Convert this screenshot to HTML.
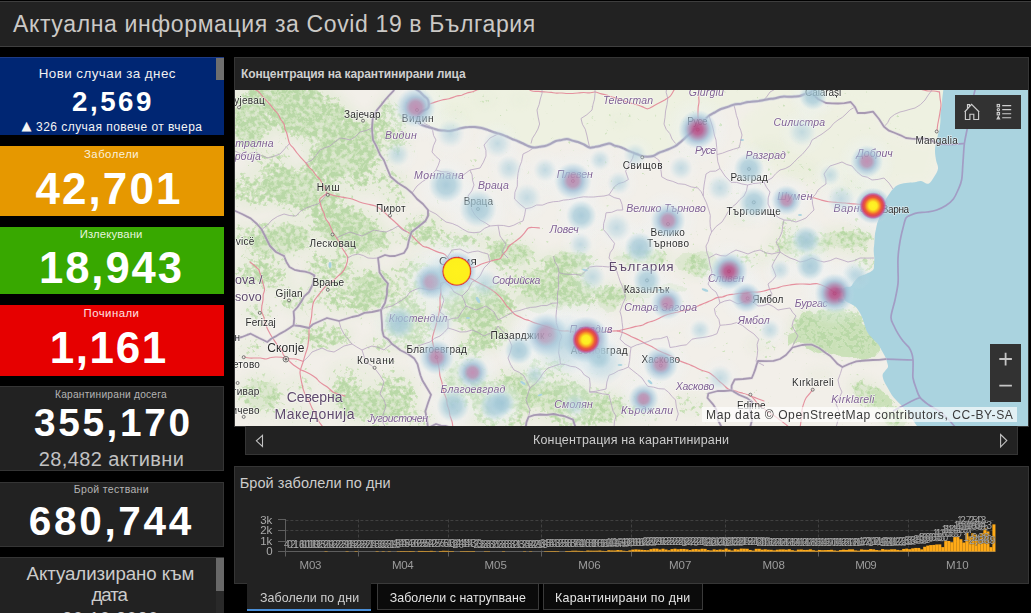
<!DOCTYPE html>
<html lang="bg">
<head>
<meta charset="utf-8">
<title>Актуална информация за Covid 19 в България</title>
<style>
html,body{margin:0;padding:0;background:#000;}
body{width:1031px;height:613px;overflow:hidden;position:relative;font-family:"Liberation Sans",sans-serif;color:#fff;}
.abs{position:absolute;}
.t{position:absolute;white-space:nowrap;}
#hdr{left:0;top:1px;width:1031px;height:46px;background:#222;border-top:1px solid #3e3e3e;border-bottom:1px solid #404040;box-sizing:border-box;}
.card{position:absolute;left:0;width:223.5px;box-sizing:border-box;}
.dark{background:#222;border:1px solid #353535;border-left:none;}
.panel{position:absolute;background:#222;border:1px solid #353535;box-sizing:border-box;}
</style>
</head>
<body>
<div id="hdr" class="abs"></div>
<div class="t" style="left:13px;top:13.43px;font-size:23px;line-height:23px;letter-spacing:0.629px;color:#cbc9c6;">Актуална информация за Covid 19 в България</div>
<div class="card" style="top:57.2px;height:77.8px;background:#002673;border-top:1px solid #1d3b86"></div>
<i class="abs" style="left:216px;top:58px;width:7.5px;height:22px;background:#6e6e6e"></i>
<div class="card" style="top:146px;height:70px;background:#e69800"></div>
<div class="card" style="top:227px;height:67px;background:#38a800"></div>
<div class="card" style="top:305px;height:70.5px;background:#e60000"></div>
<div class="card dark" style="top:386px;height:85px"></div>
<div class="card dark" style="top:482px;height:65px"></div>
<div class="card dark" style="top:557px;height:60px"></div>
<i class="abs" style="left:216px;top:558px;width:7.5px;height:56px;background:#292929"></i>
<i class="abs" style="left:216px;top:558px;width:7.5px;height:33px;background:#686868"></i>
<div class="t" style="left:38.7px;top:67.06px;font-size:13.4px;line-height:13.4px;letter-spacing:0.438px;color:#f0f0f0;">Нови случаи за днес</div>
<div class="t" style="left:72px;top:87.85px;font-size:27.7px;line-height:27.7px;letter-spacing:2.528px;color:#fff;font-weight:bold;">2,569</div>
<div class="t" style="left:21.6px;top:119.2px;font-size:13px;line-height:13px;letter-spacing:0px;color:#f4f4f4;font-family:&quot;DejaVu Sans&quot;,sans-serif;">▲</div>
<div class="t" style="left:36px;top:120.84px;font-size:12px;line-height:12px;letter-spacing:0.462px;color:#f4f4f4;">326 случая повече от вчера</div>
<div class="t" style="left:84px;top:149.03px;font-size:11.3px;line-height:11.3px;letter-spacing:0.514px;color:#fbf1dc;">Заболели</div>
<div class="t" style="left:35.4px;top:167.25px;font-size:44px;line-height:44px;letter-spacing:2.099px;color:#fff;font-weight:bold;">42,701</div>
<div class="t" style="left:79.7px;top:229.43px;font-size:11.3px;line-height:11.3px;letter-spacing:0.127px;color:#e6f4dc;">Излекувани</div>
<div class="t" style="left:39px;top:246.79px;font-size:43.6px;line-height:43.6px;letter-spacing:1.942px;color:#fff;font-weight:bold;">18,943</div>
<div class="t" style="left:83.5px;top:308.43px;font-size:11.3px;line-height:11.3px;letter-spacing:0.52px;color:#fde3e3;">Починали</div>
<div class="t" style="left:49.8px;top:326.05px;font-size:44px;line-height:44px;letter-spacing:1.566px;color:#fff;font-weight:bold;">1,161</div>
<div class="t" style="left:55px;top:389.67px;font-size:10.2px;line-height:10.2px;letter-spacing:0.233px;color:#b4b4b4;">Карантинирани досега</div>
<div class="t" style="left:34px;top:403.86px;font-size:38.8px;line-height:38.8px;letter-spacing:2.623px;color:#fff;font-weight:bold;">355,170</div>
<div class="t" style="left:38.8px;top:449.07px;font-size:20px;line-height:20px;letter-spacing:0.39px;color:#c2c2c2;">28,482 активни</div>
<div class="t" style="left:73.8px;top:484.11px;font-size:10.5px;line-height:10.5px;letter-spacing:0.322px;color:#b4b4b4;">Брой тествани</div>
<div class="t" style="left:28.8px;top:500.72px;font-size:40.5px;line-height:40.5px;letter-spacing:2.671px;color:#fff;font-weight:bold;">680,744</div>
<div class="t" style="left:26.5px;top:564.87px;font-size:18.7px;line-height:18.7px;letter-spacing:-0.065px;color:#ccc;">Актуализирано към</div>
<div class="t" style="left:91.5px;top:586.17px;font-size:18.7px;line-height:18.7px;letter-spacing:-1.078px;color:#ccc;">дата</div>
<div class="t" style="left:62px;top:609.77px;font-size:18.7px;line-height:18.7px;letter-spacing:0.318px;color:#ccc;">30.10.2020</div>
<div class="panel" style="left:234px;top:57px;width:795px;height:370px"></div>
<div class="t" style="left:241px;top:68.14px;font-size:12px;line-height:12px;letter-spacing:-0.113px;color:#cfcfcf;font-weight:bold;">Концентрация на карантинирани лица</div>
<div id="map" class="abs" style="left:235px;top:90px;width:793px;height:336px;background:#f2efe9;overflow:hidden"><svg width="793" height="336" viewBox="235 90 793 336" style="position:absolute;left:0;top:0;display:block">
<defs>
<filter id="fo" x="0" y="0" width="100%" height="100%" filterUnits="objectBoundingBox" color-interpolation-filters="sRGB">
 <feGaussianBlur in="SourceAlpha" stdDeviation="4" result="b"/>
 <feTurbulence type="fractalNoise" baseFrequency="0.045" numOctaves="2" seed="3" result="t2"/>
 <feColorMatrix in="t2" type="matrix" values="0 0 0 0 0 0 0 0 0 0 0 0 0 0 0 1 0 0 0 0" result="n2"/>
 <feTurbulence type="fractalNoise" baseFrequency="0.22" numOctaves="3" seed="7" result="t1"/>
 <feColorMatrix in="t1" type="matrix" values="0 0 0 0 0 0 0 0 0 0 0 0 0 0 0 1 0 0 0 0" result="n1"/>
 <feComposite in="b" in2="n2" operator="arithmetic" k1="0" k2="1" k3="0.9" k4="-0.45" result="b2"/>
 <feComposite in="b2" in2="n1" operator="arithmetic" k1="0" k2="5" k3="10" k4="-8.0" result="m"/>
 <feFlood flood-color="#cde2bc"/><feComposite in2="m" operator="in" result="light"/>
 <feComposite in="b2" in2="n1" operator="arithmetic" k1="0" k2="5" k3="10" k4="-9.6" result="m2"/>
 <feFlood flood-color="#b9d8a7"/><feComposite in2="m2" operator="in" result="dark"/>
 <feMerge><feMergeNode in="light"/><feMergeNode in="dark"/></feMerge>
 <feGaussianBlur stdDeviation="0.45"/>
</filter>
<filter id="wash" x="0" y="0" width="100%" height="100%"><feGaussianBlur stdDeviation="5"/></filter>
<filter id="rough" x="0" y="0" width="100%" height="100%"><feTurbulence type="fractalNoise" baseFrequency="0.06" numOctaves="3" seed="4" result="t"/><feDisplacementMap in="SourceGraphic" in2="t" scale="14" xChannelSelector="R" yChannelSelector="G"/><feGaussianBlur stdDeviation=".7"/></filter>
<filter id="hz" x="-20%" y="-20%" width="140%" height="140%"><feGaussianBlur stdDeviation="1.2"/></filter>
<filter id="bl" x="-5%" y="-5%" width="110%" height="110%"><feGaussianBlur stdDeviation="0.45"/></filter>
<radialGradient id="hazeg"><stop offset="0" stop-color="#eef4f8" stop-opacity=".6"/><stop offset=".55" stop-color="#eef4f8" stop-opacity=".4"/><stop offset="1" stop-color="#eef4f8" stop-opacity="0"/></radialGradient>
<radialGradient id="g1"><stop offset="0" stop-color="#a6cad8" stop-opacity=".62"/><stop offset=".5" stop-color="#b2d2de" stop-opacity=".42"/><stop offset="1" stop-color="#c2dde6" stop-opacity="0"/></radialGradient>
<radialGradient id="g2"><stop offset="0" stop-color="#9cc3d4" stop-opacity=".82"/><stop offset=".5" stop-color="#a6cad8" stop-opacity=".72"/><stop offset=".78" stop-color="#b5d5e0" stop-opacity=".4"/><stop offset="1" stop-color="#c2dde6" stop-opacity="0"/></radialGradient>
<radialGradient id="g3"><stop offset="0" stop-color="#bb82ac" stop-opacity=".88"/><stop offset=".3" stop-color="#b08fb2" stop-opacity=".86"/><stop offset=".52" stop-color="#9fbcd4" stop-opacity=".8"/><stop offset=".78" stop-color="#b0d0e1" stop-opacity=".45"/><stop offset="1" stop-color="#c2dde6" stop-opacity="0"/></radialGradient>
<radialGradient id="g4"><stop offset="0" stop-color="#b8457e" stop-opacity=".92"/><stop offset=".25" stop-color="#b2598e" stop-opacity=".9"/><stop offset=".45" stop-color="#a58bb2" stop-opacity=".85"/><stop offset=".62" stop-color="#9fbcd4" stop-opacity=".78"/><stop offset=".82" stop-color="#b0d0e1" stop-opacity=".45"/><stop offset="1" stop-color="#c0dbe8" stop-opacity="0"/></radialGradient>
<radialGradient id="g6"><stop offset="0" stop-color="#9a8ab6" stop-opacity=".9"/><stop offset=".55" stop-color="#9d9cc2" stop-opacity=".8"/><stop offset=".72" stop-color="#9fbcd4" stop-opacity=".65"/><stop offset=".88" stop-color="#b0d0e1" stop-opacity=".35"/><stop offset="1" stop-color="#c0dbe8" stop-opacity="0"/></radialGradient>
<radialGradient id="hbig"><stop offset="0" stop-color="#fff21c"/><stop offset=".86" stop-color="#fdf01c"/><stop offset=".91" stop-color="#f5a21f"/><stop offset=".96" stop-color="#e0342e"/><stop offset="1" stop-color="#c63a6c" stop-opacity=".8"/></radialGradient>
<radialGradient id="hmid"><stop offset="0" stop-color="#fff426"/><stop offset=".3" stop-color="#fdec22"/><stop offset=".46" stop-color="#f8a922"/><stop offset=".62" stop-color="#ec5a38"/><stop offset=".76" stop-color="#dc4253" stop-opacity=".95"/><stop offset=".88" stop-color="#c2579a" stop-opacity=".8"/><stop offset="1" stop-color="#a383b8" stop-opacity=".0"/></radialGradient>
</defs>
<rect x="235" y="90" width="793" height="336" fill="#f2efe9"/>
<path d="M410.0 84.0C410.0 84.3 408.3 84.7 410.0 86.0C411.7 87.3 417.0 89.7 420.0 92.0C423.0 94.3 426.7 97.3 428.0 100.0C429.3 102.7 429.2 106.0 428.0 108.0C426.8 110.0 422.8 110.3 421.0 112.0C419.2 113.7 417.2 116.0 417.0 118.0C416.8 120.0 418.2 122.5 420.0 124.0C421.8 125.5 425.0 126.0 428.0 127.0C431.0 128.0 434.3 129.3 438.0 130.0C441.7 130.7 446.0 131.3 450.0 131.0C454.0 130.7 457.8 128.7 462.0 128.0C466.2 127.3 470.7 126.7 475.0 127.0C479.3 127.3 483.8 128.8 488.0 130.0C492.2 131.2 496.0 132.5 500.0 134.0C504.0 135.5 508.0 137.3 512.0 139.0C516.0 140.7 520.3 142.6 524.0 144.0C527.7 145.4 530.5 147.3 534.0 147.6C537.5 147.9 541.3 147.1 545.0 146.0C548.7 144.9 552.3 142.2 556.0 141.0C559.7 139.8 563.3 138.8 567.0 139.0C570.7 139.2 574.2 140.6 578.0 142.0C581.8 143.4 585.8 146.9 589.5 147.6C593.2 148.3 596.8 146.7 600.0 146.0C603.2 145.3 605.7 143.3 609.0 143.5C612.3 143.7 615.8 145.4 620.0 147.0C624.2 148.6 630.0 151.4 634.0 153.0C638.0 154.6 640.8 156.0 644.0 156.5C647.2 157.0 649.7 156.9 653.0 156.0C656.3 155.1 660.2 152.7 664.0 151.0C667.8 149.3 672.2 148.0 675.5 146.0C678.8 144.0 681.2 141.3 684.0 139.0C686.8 136.7 689.3 134.7 692.0 132.0C694.7 129.3 697.2 125.7 700.0 123.0C702.8 120.3 705.5 118.0 709.0 115.7C712.5 113.4 716.9 110.8 721.0 109.0C725.1 107.2 729.3 105.8 733.8 104.6C738.3 103.4 743.0 102.8 748.0 102.0C753.0 101.2 758.0 100.9 764.0 100.0C770.0 99.1 778.0 97.2 784.0 96.5C790.0 95.8 795.7 96.6 800.0 96.0C804.3 95.4 807.0 92.5 810.0 93.0C813.0 93.5 815.3 97.3 818.0 99.0C820.7 100.7 822.7 102.2 826.0 103.0C829.3 103.8 833.9 103.7 838.0 103.5C842.1 103.3 847.9 101.4 850.7 102.0C853.5 102.6 853.8 105.2 855.0 107.0C856.2 108.8 856.0 112.0 857.7 113.0C859.4 114.0 862.5 113.2 865.0 113.0C867.5 112.8 870.7 110.6 873.0 111.6C875.3 112.6 877.2 116.5 879.0 119.0C880.8 121.5 881.3 124.5 884.0 126.8C886.7 129.1 891.3 131.1 895.0 133.0C898.7 134.9 902.3 137.0 906.0 138.0C909.7 139.0 913.3 138.8 917.0 139.0C920.7 139.2 924.2 138.2 928.0 139.0C931.8 139.8 936.7 143.2 939.5 144.0C942.3 144.8 944.1 154.0 945.0 144.0C945.9 134.0 945.0 94.0 945.0 84.0Z" fill="#ecf1dd" opacity=".75"/>
<path d="M764.0 100.0C771.7 99.2 799.7 94.5 810.0 95.0C820.3 95.5 819.2 101.8 826.0 103.0C832.8 104.2 845.4 100.3 850.7 102.0C856.0 103.7 854.0 111.4 857.7 113.0C861.4 114.6 868.6 109.3 873.0 111.6C877.4 113.9 878.5 122.4 884.0 126.8C889.5 131.2 896.8 135.1 906.0 138.0C915.2 140.9 934.5 139.0 939.5 144.0C944.5 149.0 937.9 161.3 936.0 168.0C934.1 174.7 934.3 181.2 928.0 184.0C921.7 186.8 905.3 181.7 898.0 185.0C890.7 188.3 890.3 201.5 884.0 204.0C877.7 206.5 869.0 202.3 860.0 200.0C851.0 197.7 840.0 193.3 830.0 190.0C820.0 186.7 810.0 183.3 800.0 180.0C790.0 176.7 779.2 175.0 770.0 170.0C760.8 165.0 750.0 158.3 745.0 150.0C740.0 141.7 740.8 125.0 740.0 120.0Z" fill="#ecf1dd" opacity=".6" filter="url(#wash)"/>
<g filter="url(#wash)" opacity=".4">
<ellipse cx="300" cy="110" rx="63.2" ry="33.6" transform="rotate(20 300 110)" fill="#d9e8ca" fill-opacity="1"/>
<ellipse cx="250" cy="120" rx="25.3" ry="36.0" transform="rotate(0 250 120)" fill="#d9e8ca" fill-opacity="1"/>
<ellipse cx="345" cy="150" rx="46.0" ry="36.0" transform="rotate(-30 345 150)" fill="#d9e8ca" fill-opacity="1"/>
<ellipse cx="300" cy="190" rx="51.7" ry="26.4" transform="rotate(10 300 190)" fill="#d9e8ca" fill-opacity="1"/>
<ellipse cx="255" cy="190" rx="28.7" ry="21.6" transform="rotate(0 255 190)" fill="#d9e8ca" fill-opacity="0.9"/>
<ellipse cx="350" cy="230" rx="46.0" ry="26.4" transform="rotate(20 350 230)" fill="#d9e8ca" fill-opacity="1"/>
<ellipse cx="280" cy="240" rx="40.2" ry="21.6" transform="rotate(-10 280 240)" fill="#d9e8ca" fill-opacity="1"/>
<ellipse cx="255" cy="270" rx="23.0" ry="21.6" transform="rotate(0 255 270)" fill="#d9e8ca" fill-opacity="0.7999999999999999"/>
<ellipse cx="330" cy="270" rx="28.7" ry="21.6" transform="rotate(0 330 270)" fill="#d9e8ca" fill-opacity="0.9"/>
<ellipse cx="370" cy="290" rx="28.7" ry="24.0" transform="rotate(0 370 290)" fill="#d9e8ca" fill-opacity="1"/>
<ellipse cx="300" cy="300" rx="20.7" ry="16.8" transform="rotate(0 300 300)" fill="#d9e8ca" fill-opacity="0.7"/>
<ellipse cx="390" cy="130" rx="20.7" ry="36.0" transform="rotate(0 390 130)" fill="#d9e8ca" fill-opacity="0.9"/>
<ellipse cx="395" cy="190" rx="16.1" ry="21.6" transform="rotate(0 395 190)" fill="#d9e8ca" fill-opacity="0.7999999999999999"/>
<ellipse cx="365" cy="180" rx="25.3" ry="16.8" transform="rotate(0 365 180)" fill="#d9e8ca" fill-opacity="0.7999999999999999"/>
<ellipse cx="270" cy="160" rx="23.0" ry="14.4" transform="rotate(0 270 160)" fill="#d9e8ca" fill-opacity="0.7"/>
<ellipse cx="245" cy="235" rx="16.1" ry="14.4" transform="rotate(0 245 235)" fill="#d9e8ca" fill-opacity="0.7999999999999999"/>
<ellipse cx="272" cy="275" rx="23.0" ry="19.2" transform="rotate(0 272 275)" fill="#d9e8ca" fill-opacity="0.7999999999999999"/>
<ellipse cx="258" cy="312" rx="16.1" ry="14.4" transform="rotate(0 258 312)" fill="#d9e8ca" fill-opacity="0.7"/>
<ellipse cx="325" cy="338" rx="27.6" ry="10.8" transform="rotate(0 325 338)" fill="#d9e8ca" fill-opacity="0.9"/>
<ellipse cx="405" cy="322" rx="27.6" ry="24.0" transform="rotate(0 405 322)" fill="#d9e8ca" fill-opacity="1"/>
<ellipse cx="375" cy="405" rx="46.0" ry="21.6" transform="rotate(0 375 405)" fill="#d9e8ca" fill-opacity="1"/>
<ellipse cx="345" cy="395" rx="20.7" ry="16.8" transform="rotate(0 345 395)" fill="#d9e8ca" fill-opacity="0.7999999999999999"/>
<ellipse cx="415" cy="275" rx="25.3" ry="21.6" transform="rotate(0 415 275)" fill="#d9e8ca" fill-opacity="0.7999999999999999"/>
<ellipse cx="350" cy="300" rx="29.9" ry="16.8" transform="rotate(0 350 300)" fill="#d9e8ca" fill-opacity="0.9"/>
<ellipse cx="300" cy="385" rx="16.1" ry="12.0" transform="rotate(0 300 385)" fill="#d9e8ca" fill-opacity="0.6"/>
<ellipse cx="420" cy="420" rx="16.1" ry="9.6" transform="rotate(0 420 420)" fill="#d9e8ca" fill-opacity="0.7999999999999999"/>
<ellipse cx="380" cy="345" rx="16.1" ry="9.6" transform="rotate(0 380 345)" fill="#d9e8ca" fill-opacity="0.6"/>
<ellipse cx="260" cy="395" rx="25.3" ry="24.0" transform="rotate(0 260 395)" fill="#d9e8ca" fill-opacity="0.7999999999999999"/>
<ellipse cx="320" cy="335" rx="34.5" ry="14.4" transform="rotate(0 320 335)" fill="#d9e8ca" fill-opacity="0.7"/>
<ellipse cx="350" cy="375" rx="25.3" ry="16.8" transform="rotate(0 350 375)" fill="#d9e8ca" fill-opacity="0.6"/>
<ellipse cx="395" cy="395" rx="25.3" ry="26.4" transform="rotate(0 395 395)" fill="#d9e8ca" fill-opacity="0.7999999999999999"/>
<ellipse cx="300" cy="415" rx="25.3" ry="12.0" transform="rotate(0 300 415)" fill="#d9e8ca" fill-opacity="0.6"/>
<ellipse cx="420" cy="330" rx="18.4" ry="21.6" transform="rotate(0 420 330)" fill="#d9e8ca" fill-opacity="0.7999999999999999"/>
<ellipse cx="250" cy="350" rx="13.8" ry="12.0" transform="rotate(0 250 350)" fill="#d9e8ca" fill-opacity="0.6"/>
<ellipse cx="420" cy="230" rx="25.3" ry="16.8" transform="rotate(-20 420 230)" fill="#d9e8ca" fill-opacity="0.9"/>
<ellipse cx="445" cy="240" rx="20.7" ry="12.0" transform="rotate(0 445 240)" fill="#d9e8ca" fill-opacity="0.7"/>
<ellipse cx="410" cy="300" rx="23.0" ry="14.4" transform="rotate(0 410 300)" fill="#d9e8ca" fill-opacity="0.7"/>
<ellipse cx="400" cy="340" rx="16.1" ry="14.4" transform="rotate(0 400 340)" fill="#d9e8ca" fill-opacity="0.6"/>
<ellipse cx="470" cy="240" rx="29.9" ry="10.8" transform="rotate(-10 470 240)" fill="#d9e8ca" fill-opacity="0.9"/>
<ellipse cx="510" cy="254" rx="27.6" ry="16.8" transform="rotate(0 510 254)" fill="#d9e8ca" fill-opacity="1"/>
<ellipse cx="567" cy="261" rx="29.9" ry="12.0" transform="rotate(0 567 261)" fill="#d9e8ca" fill-opacity="1"/>
<ellipse cx="642" cy="257" rx="32.2" ry="9.6" transform="rotate(0 642 257)" fill="#d9e8ca" fill-opacity="1"/>
<ellipse cx="696" cy="264" rx="19.5" ry="13.2" transform="rotate(0 696 264)" fill="#d9e8ca" fill-opacity="1"/>
<ellipse cx="750" cy="260" rx="27.6" ry="6.0" transform="rotate(0 750 260)" fill="#d9e8ca" fill-opacity="0.7"/>
<ellipse cx="800" cy="246" rx="34.5" ry="14.4" transform="rotate(0 800 246)" fill="#d9e8ca" fill-opacity="0.9"/>
<ellipse cx="845" cy="240" rx="32.2" ry="14.4" transform="rotate(0 845 240)" fill="#d9e8ca" fill-opacity="0.9"/>
<ellipse cx="865" cy="262" rx="13.8" ry="12.0" transform="rotate(0 865 262)" fill="#d9e8ca" fill-opacity="0.7999999999999999"/>
<ellipse cx="790" cy="226" rx="16.1" ry="9.6" transform="rotate(0 790 226)" fill="#d9e8ca" fill-opacity="0.6"/>
<ellipse cx="556" cy="287" rx="51.7" ry="22.8" transform="rotate(8 556 287)" fill="#d9e8ca" fill-opacity="1"/>
<ellipse cx="610" cy="296" rx="18.4" ry="14.4" transform="rotate(0 610 296)" fill="#d9e8ca" fill-opacity="1"/>
<ellipse cx="640" cy="300" rx="18.4" ry="7.2" transform="rotate(0 640 300)" fill="#d9e8ca" fill-opacity="0.6"/>
<ellipse cx="478" cy="305" rx="43.7" ry="28.8" transform="rotate(0 478 305)" fill="#d9e8ca" fill-opacity="1"/>
<ellipse cx="490" cy="335" rx="23.0" ry="16.8" transform="rotate(0 490 335)" fill="#d9e8ca" fill-opacity="1"/>
<ellipse cx="470" cy="350" rx="16.1" ry="16.8" transform="rotate(0 470 350)" fill="#d9e8ca" fill-opacity="0.9"/>
<ellipse cx="455" cy="385" rx="16.1" ry="26.4" transform="rotate(0 455 385)" fill="#d9e8ca" fill-opacity="1"/>
<ellipse cx="485" cy="395" rx="20.7" ry="21.6" transform="rotate(0 485 395)" fill="#d9e8ca" fill-opacity="1"/>
<ellipse cx="520" cy="390" rx="29.9" ry="24.0" transform="rotate(0 520 390)" fill="#d9e8ca" fill-opacity="1"/>
<ellipse cx="560" cy="395" rx="34.5" ry="21.6" transform="rotate(0 560 395)" fill="#d9e8ca" fill-opacity="1"/>
<ellipse cx="600" cy="405" rx="29.9" ry="16.8" transform="rotate(0 600 405)" fill="#d9e8ca" fill-opacity="1"/>
<ellipse cx="545" cy="365" rx="23.0" ry="12.0" transform="rotate(0 545 365)" fill="#d9e8ca" fill-opacity="0.7999999999999999"/>
<ellipse cx="640" cy="410" rx="23.0" ry="12.0" transform="rotate(0 640 410)" fill="#d9e8ca" fill-opacity="0.7"/>
<ellipse cx="690" cy="405" rx="18.4" ry="12.0" transform="rotate(0 690 405)" fill="#d9e8ca" fill-opacity="0.6"/>
<ellipse cx="580" cy="420" rx="46.0" ry="9.6" transform="rotate(0 580 420)" fill="#d9e8ca" fill-opacity="0.9"/>
<ellipse cx="500" cy="420" rx="34.5" ry="9.6" transform="rotate(0 500 420)" fill="#d9e8ca" fill-opacity="0.9"/>
<ellipse cx="830" cy="330" rx="41.4" ry="24.0" transform="rotate(10 830 330)" fill="#d9e8ca" fill-opacity="1"/>
<ellipse cx="862" cy="340" rx="23.0" ry="18.0" transform="rotate(30 862 340)" fill="#d9e8ca" fill-opacity="1"/>
<ellipse cx="845" cy="328" rx="25.3" ry="14.4" transform="rotate(10 845 328)" fill="#d9e8ca" fill-opacity="1"/>
<ellipse cx="800" cy="335" rx="16.1" ry="9.6" transform="rotate(0 800 335)" fill="#d9e8ca" fill-opacity="0.7"/>
<ellipse cx="850" cy="315" rx="18.4" ry="9.6" transform="rotate(0 850 315)" fill="#d9e8ca" fill-opacity="0.9"/>
<ellipse cx="760" cy="345" rx="13.8" ry="9.6" transform="rotate(0 760 345)" fill="#d9e8ca" fill-opacity="0.5"/>
<ellipse cx="870" cy="395" rx="25.3" ry="14.4" transform="rotate(30 870 395)" fill="#d9e8ca" fill-opacity="0.9"/>
<ellipse cx="895" cy="418" rx="16.1" ry="12.0" transform="rotate(0 895 418)" fill="#d9e8ca" fill-opacity="0.9"/>
<ellipse cx="820" cy="375" rx="16.1" ry="7.2" transform="rotate(0 820 375)" fill="#d9e8ca" fill-opacity="0.5"/>
<ellipse cx="770" cy="150" rx="16.1" ry="9.6" transform="rotate(0 770 150)" fill="#d9e8ca" fill-opacity="0.5"/>
<ellipse cx="800" cy="170" rx="18.4" ry="9.6" transform="rotate(0 800 170)" fill="#d9e8ca" fill-opacity="0.5"/>
<ellipse cx="850" cy="190" rx="16.1" ry="9.6" transform="rotate(0 850 190)" fill="#d9e8ca" fill-opacity="0.5"/>
<ellipse cx="740" cy="215" rx="16.1" ry="9.6" transform="rotate(0 740 215)" fill="#d9e8ca" fill-opacity="0.5"/>
<ellipse cx="520" cy="100" rx="9.2" ry="6.0" transform="rotate(0 520 100)" fill="#d9e8ca" fill-opacity="0.4"/>
<ellipse cx="620" cy="120" rx="9.2" ry="6.0" transform="rotate(0 620 120)" fill="#d9e8ca" fill-opacity="0.4"/>
<ellipse cx="455" cy="115" rx="13.8" ry="7.2" transform="rotate(0 455 115)" fill="#d9e8ca" fill-opacity="0.4"/>
<ellipse cx="485" cy="100" rx="11.5" ry="7.2" transform="rotate(0 485 100)" fill="#d9e8ca" fill-opacity="0.4"/>
</g>
<g filter="url(#rough)" opacity=".45">
<ellipse cx="645" cy="291" rx="45" ry="6" transform="rotate(-4 645 291)" fill="#cfe3be"/>
<ellipse cx="612" cy="300" rx="12" ry="11" transform="rotate(0 612 300)" fill="#cfe3be"/>
<ellipse cx="698" cy="264" rx="22" ry="10" transform="rotate(0 698 264)" fill="#cfe3be"/>
<ellipse cx="636" cy="258" rx="22" ry="5" transform="rotate(0 636 258)" fill="#cfe3be"/>
<ellipse cx="545" cy="300" rx="30" ry="10" transform="rotate(0 545 300)" fill="#cfe3be"/>
<ellipse cx="835" cy="332" rx="34" ry="17" transform="rotate(15 835 332)" fill="#cfe3be"/>
<ellipse cx="862" cy="343" rx="16" ry="12" transform="rotate(30 862 343)" fill="#cfe3be"/>
<ellipse cx="806" cy="338" rx="10" ry="5" transform="rotate(0 806 338)" fill="#cfe3be"/>
<ellipse cx="848" cy="322" rx="18" ry="8" transform="rotate(10 848 322)" fill="#cfe3be"/>
<ellipse cx="510" cy="254" rx="22" ry="12" transform="rotate(0 510 254)" fill="#cfe3be"/>
<ellipse cx="567" cy="261" rx="24" ry="9" transform="rotate(0 567 261)" fill="#cfe3be"/>
<ellipse cx="642" cy="257" rx="26" ry="7" transform="rotate(0 642 257)" fill="#cfe3be"/>
<ellipse cx="696" cy="264" rx="16" ry="10" transform="rotate(0 696 264)" fill="#cfe3be"/>
<ellipse cx="556" cy="287" rx="40" ry="15" transform="rotate(8 556 287)" fill="#cfe3be"/>
<ellipse cx="610" cy="296" rx="14" ry="10" transform="rotate(0 610 296)" fill="#cfe3be"/>
<ellipse cx="478" cy="305" rx="32" ry="20" transform="rotate(0 478 305)" fill="#cfe3be"/>
<ellipse cx="520" cy="392" rx="26" ry="18" transform="rotate(0 520 392)" fill="#cfe3be"/>
<ellipse cx="560" cy="398" rx="28" ry="15" transform="rotate(0 560 398)" fill="#cfe3be"/>
<ellipse cx="486" cy="398" rx="16" ry="16" transform="rotate(0 486 398)" fill="#cfe3be"/>
<ellipse cx="600" cy="407" rx="22" ry="10" transform="rotate(0 600 407)" fill="#cfe3be"/>
<ellipse cx="455" cy="385" rx="10" ry="18" transform="rotate(0 455 385)" fill="#cfe3be"/>
<ellipse cx="492" cy="334" rx="16" ry="11" transform="rotate(0 492 334)" fill="#cfe3be"/>
<ellipse cx="300" cy="110" rx="45" ry="20" transform="rotate(20 300 110)" fill="#cfe3be"/>
<ellipse cx="345" cy="150" rx="32" ry="24" transform="rotate(-30 345 150)" fill="#cfe3be"/>
<ellipse cx="350" cy="230" rx="34" ry="18" transform="rotate(20 350 230)" fill="#cfe3be"/>
<ellipse cx="280" cy="240" rx="28" ry="14" transform="rotate(-10 280 240)" fill="#cfe3be"/>
<ellipse cx="300" cy="190" rx="36" ry="16" transform="rotate(10 300 190)" fill="#cfe3be"/>
<ellipse cx="250" cy="122" rx="16" ry="24" transform="rotate(0 250 122)" fill="#cfe3be"/>
<ellipse cx="372" cy="290" rx="20" ry="15" transform="rotate(0 372 290)" fill="#cfe3be"/>
<ellipse cx="405" cy="322" rx="18" ry="14" transform="rotate(0 405 322)" fill="#cfe3be"/>
<ellipse cx="375" cy="405" rx="32" ry="13" transform="rotate(0 375 405)" fill="#cfe3be"/>
<ellipse cx="260" cy="395" rx="16" ry="14" transform="rotate(0 260 395)" fill="#cfe3be"/>
<ellipse cx="800" cy="246" rx="26" ry="9" transform="rotate(0 800 246)" fill="#cfe3be"/>
<ellipse cx="845" cy="240" rx="24" ry="9" transform="rotate(0 845 240)" fill="#cfe3be"/>
<ellipse cx="870" cy="395" rx="18" ry="9" transform="rotate(30 870 395)" fill="#cfe3be"/>
<ellipse cx="895" cy="418" rx="12" ry="8" transform="rotate(0 895 418)" fill="#cfe3be"/>
</g>
<g filter="url(#rough)" opacity=".92">
<ellipse cx="836" cy="334" rx="42" ry="22" transform="rotate(12 836 334)" fill="#c8e0b6"/>
<ellipse cx="866" cy="345" rx="15" ry="12" transform="rotate(20 866 345)" fill="#c8e0b6"/>
<ellipse cx="800" cy="338" rx="12" ry="6" transform="rotate(0 800 338)" fill="#c8e0b6"/>
<ellipse cx="848" cy="318" rx="16" ry="7" transform="rotate(10 848 318)" fill="#c8e0b6"/>
<ellipse cx="880" cy="398" rx="14" ry="7" transform="rotate(30 880 398)" fill="#c8e0b6"/>
</g>
<g filter="url(#fo)">
<ellipse cx="300" cy="110" rx="55" ry="28" transform="rotate(20 300 110)" fill="#000" fill-opacity="1"/>
<ellipse cx="250" cy="120" rx="22" ry="30" transform="rotate(0 250 120)" fill="#000" fill-opacity="0.9"/>
<ellipse cx="345" cy="150" rx="40" ry="30" transform="rotate(-30 345 150)" fill="#000" fill-opacity="1"/>
<ellipse cx="300" cy="190" rx="45" ry="22" transform="rotate(10 300 190)" fill="#000" fill-opacity="0.9"/>
<ellipse cx="255" cy="190" rx="25" ry="18" transform="rotate(0 255 190)" fill="#000" fill-opacity="0.8"/>
<ellipse cx="350" cy="230" rx="40" ry="22" transform="rotate(20 350 230)" fill="#000" fill-opacity="1"/>
<ellipse cx="280" cy="240" rx="35" ry="18" transform="rotate(-10 280 240)" fill="#000" fill-opacity="0.9"/>
<ellipse cx="255" cy="270" rx="20" ry="18" transform="rotate(0 255 270)" fill="#000" fill-opacity="0.7"/>
<ellipse cx="330" cy="270" rx="25" ry="18" transform="rotate(0 330 270)" fill="#000" fill-opacity="0.8"/>
<ellipse cx="370" cy="290" rx="25" ry="20" transform="rotate(0 370 290)" fill="#000" fill-opacity="0.9"/>
<ellipse cx="300" cy="300" rx="18" ry="14" transform="rotate(0 300 300)" fill="#000" fill-opacity="0.6"/>
<ellipse cx="390" cy="130" rx="18" ry="30" transform="rotate(0 390 130)" fill="#000" fill-opacity="0.8"/>
<ellipse cx="395" cy="190" rx="14" ry="18" transform="rotate(0 395 190)" fill="#000" fill-opacity="0.7"/>
<ellipse cx="365" cy="180" rx="22" ry="14" transform="rotate(0 365 180)" fill="#000" fill-opacity="0.7"/>
<ellipse cx="270" cy="160" rx="20" ry="12" transform="rotate(0 270 160)" fill="#000" fill-opacity="0.6"/>
<ellipse cx="245" cy="235" rx="14" ry="12" transform="rotate(0 245 235)" fill="#000" fill-opacity="0.7"/>
<ellipse cx="272" cy="275" rx="20" ry="16" transform="rotate(0 272 275)" fill="#000" fill-opacity="0.7"/>
<ellipse cx="258" cy="312" rx="14" ry="12" transform="rotate(0 258 312)" fill="#000" fill-opacity="0.6"/>
<ellipse cx="325" cy="338" rx="24" ry="9" transform="rotate(0 325 338)" fill="#000" fill-opacity="0.8"/>
<ellipse cx="405" cy="322" rx="24" ry="20" transform="rotate(0 405 322)" fill="#000" fill-opacity="0.9"/>
<ellipse cx="375" cy="405" rx="40" ry="18" transform="rotate(0 375 405)" fill="#000" fill-opacity="0.9"/>
<ellipse cx="345" cy="395" rx="18" ry="14" transform="rotate(0 345 395)" fill="#000" fill-opacity="0.7"/>
<ellipse cx="415" cy="275" rx="22" ry="18" transform="rotate(0 415 275)" fill="#000" fill-opacity="0.7"/>
<ellipse cx="350" cy="300" rx="26" ry="14" transform="rotate(0 350 300)" fill="#000" fill-opacity="0.8"/>
<ellipse cx="300" cy="385" rx="14" ry="10" transform="rotate(0 300 385)" fill="#000" fill-opacity="0.5"/>
<ellipse cx="420" cy="420" rx="14" ry="8" transform="rotate(0 420 420)" fill="#000" fill-opacity="0.7"/>
<ellipse cx="380" cy="345" rx="14" ry="8" transform="rotate(0 380 345)" fill="#000" fill-opacity="0.5"/>
<ellipse cx="260" cy="395" rx="22" ry="20" transform="rotate(0 260 395)" fill="#000" fill-opacity="0.7"/>
<ellipse cx="320" cy="335" rx="30" ry="12" transform="rotate(0 320 335)" fill="#000" fill-opacity="0.6"/>
<ellipse cx="350" cy="375" rx="22" ry="14" transform="rotate(0 350 375)" fill="#000" fill-opacity="0.5"/>
<ellipse cx="395" cy="395" rx="22" ry="22" transform="rotate(0 395 395)" fill="#000" fill-opacity="0.7"/>
<ellipse cx="300" cy="415" rx="22" ry="10" transform="rotate(0 300 415)" fill="#000" fill-opacity="0.5"/>
<ellipse cx="420" cy="330" rx="16" ry="18" transform="rotate(0 420 330)" fill="#000" fill-opacity="0.7"/>
<ellipse cx="250" cy="350" rx="12" ry="10" transform="rotate(0 250 350)" fill="#000" fill-opacity="0.5"/>
<ellipse cx="420" cy="230" rx="22" ry="14" transform="rotate(-20 420 230)" fill="#000" fill-opacity="0.8"/>
<ellipse cx="445" cy="240" rx="18" ry="10" transform="rotate(0 445 240)" fill="#000" fill-opacity="0.6"/>
<ellipse cx="410" cy="300" rx="20" ry="12" transform="rotate(0 410 300)" fill="#000" fill-opacity="0.6"/>
<ellipse cx="400" cy="340" rx="14" ry="12" transform="rotate(0 400 340)" fill="#000" fill-opacity="0.5"/>
<ellipse cx="470" cy="240" rx="26" ry="9" transform="rotate(-10 470 240)" fill="#000" fill-opacity="0.8"/>
<ellipse cx="510" cy="254" rx="24" ry="14" transform="rotate(0 510 254)" fill="#000" fill-opacity="1"/>
<ellipse cx="567" cy="261" rx="26" ry="10" transform="rotate(0 567 261)" fill="#000" fill-opacity="1"/>
<ellipse cx="642" cy="257" rx="28" ry="8" transform="rotate(0 642 257)" fill="#000" fill-opacity="1"/>
<ellipse cx="696" cy="264" rx="17" ry="11" transform="rotate(0 696 264)" fill="#000" fill-opacity="1"/>
<ellipse cx="750" cy="260" rx="24" ry="5" transform="rotate(0 750 260)" fill="#000" fill-opacity="0.6"/>
<ellipse cx="800" cy="246" rx="30" ry="12" transform="rotate(0 800 246)" fill="#000" fill-opacity="0.8"/>
<ellipse cx="845" cy="240" rx="28" ry="12" transform="rotate(0 845 240)" fill="#000" fill-opacity="0.8"/>
<ellipse cx="865" cy="262" rx="12" ry="10" transform="rotate(0 865 262)" fill="#000" fill-opacity="0.7"/>
<ellipse cx="790" cy="226" rx="14" ry="8" transform="rotate(0 790 226)" fill="#000" fill-opacity="0.5"/>
<ellipse cx="556" cy="287" rx="45" ry="19" transform="rotate(8 556 287)" fill="#000" fill-opacity="1"/>
<ellipse cx="610" cy="296" rx="16" ry="12" transform="rotate(0 610 296)" fill="#000" fill-opacity="0.9"/>
<ellipse cx="640" cy="300" rx="16" ry="6" transform="rotate(0 640 300)" fill="#000" fill-opacity="0.5"/>
<ellipse cx="478" cy="305" rx="38" ry="24" transform="rotate(0 478 305)" fill="#000" fill-opacity="1"/>
<ellipse cx="490" cy="335" rx="20" ry="14" transform="rotate(0 490 335)" fill="#000" fill-opacity="0.9"/>
<ellipse cx="470" cy="350" rx="14" ry="14" transform="rotate(0 470 350)" fill="#000" fill-opacity="0.8"/>
<ellipse cx="455" cy="385" rx="14" ry="22" transform="rotate(0 455 385)" fill="#000" fill-opacity="0.9"/>
<ellipse cx="485" cy="395" rx="18" ry="18" transform="rotate(0 485 395)" fill="#000" fill-opacity="0.9"/>
<ellipse cx="520" cy="390" rx="26" ry="20" transform="rotate(0 520 390)" fill="#000" fill-opacity="1"/>
<ellipse cx="560" cy="395" rx="30" ry="18" transform="rotate(0 560 395)" fill="#000" fill-opacity="1"/>
<ellipse cx="600" cy="405" rx="26" ry="14" transform="rotate(0 600 405)" fill="#000" fill-opacity="0.9"/>
<ellipse cx="545" cy="365" rx="20" ry="10" transform="rotate(0 545 365)" fill="#000" fill-opacity="0.7"/>
<ellipse cx="640" cy="410" rx="20" ry="10" transform="rotate(0 640 410)" fill="#000" fill-opacity="0.6"/>
<ellipse cx="690" cy="405" rx="16" ry="10" transform="rotate(0 690 405)" fill="#000" fill-opacity="0.5"/>
<ellipse cx="580" cy="420" rx="40" ry="8" transform="rotate(0 580 420)" fill="#000" fill-opacity="0.8"/>
<ellipse cx="500" cy="420" rx="30" ry="8" transform="rotate(0 500 420)" fill="#000" fill-opacity="0.8"/>
<ellipse cx="830" cy="330" rx="36" ry="20" transform="rotate(10 830 330)" fill="#000" fill-opacity="1"/>
<ellipse cx="862" cy="340" rx="20" ry="15" transform="rotate(30 862 340)" fill="#000" fill-opacity="1"/>
<ellipse cx="845" cy="328" rx="22" ry="12" transform="rotate(10 845 328)" fill="#000" fill-opacity="1"/>
<ellipse cx="800" cy="335" rx="14" ry="8" transform="rotate(0 800 335)" fill="#000" fill-opacity="0.6"/>
<ellipse cx="850" cy="315" rx="16" ry="8" transform="rotate(0 850 315)" fill="#000" fill-opacity="0.8"/>
<ellipse cx="760" cy="345" rx="12" ry="8" transform="rotate(0 760 345)" fill="#000" fill-opacity="0.4"/>
<ellipse cx="870" cy="395" rx="22" ry="12" transform="rotate(30 870 395)" fill="#000" fill-opacity="0.8"/>
<ellipse cx="895" cy="418" rx="14" ry="10" transform="rotate(0 895 418)" fill="#000" fill-opacity="0.8"/>
<ellipse cx="820" cy="375" rx="14" ry="6" transform="rotate(0 820 375)" fill="#000" fill-opacity="0.4"/>
<ellipse cx="770" cy="150" rx="14" ry="8" transform="rotate(0 770 150)" fill="#000" fill-opacity="0.4"/>
<ellipse cx="800" cy="170" rx="16" ry="8" transform="rotate(0 800 170)" fill="#000" fill-opacity="0.4"/>
<ellipse cx="850" cy="190" rx="14" ry="8" transform="rotate(0 850 190)" fill="#000" fill-opacity="0.4"/>
<ellipse cx="740" cy="215" rx="14" ry="8" transform="rotate(0 740 215)" fill="#000" fill-opacity="0.4"/>
<ellipse cx="520" cy="100" rx="8" ry="5" transform="rotate(0 520 100)" fill="#000" fill-opacity="0.3"/>
<ellipse cx="620" cy="120" rx="8" ry="5" transform="rotate(0 620 120)" fill="#000" fill-opacity="0.3"/>
<ellipse cx="455" cy="115" rx="12" ry="6" transform="rotate(0 455 115)" fill="#000" fill-opacity="0.3"/>
<ellipse cx="485" cy="100" rx="10" ry="6" transform="rotate(0 485 100)" fill="#000" fill-opacity="0.3"/>
</g>
<g>
<circle cx="415.7" cy="107.4" r="35.7" fill="url(#hazeg)" opacity="0.8"/>
<circle cx="450.4" cy="133.8" r="25.2" fill="url(#hazeg)" opacity="0.55"/>
<circle cx="446.2" cy="185" r="31.5" fill="url(#hazeg)" opacity="0.8"/>
<circle cx="478" cy="208.7" r="33.6" fill="url(#hazeg)" opacity="0.8"/>
<circle cx="497.5" cy="143.5" r="25.2" fill="url(#hazeg)" opacity="0.55"/>
<circle cx="397.7" cy="154.6" r="21.0" fill="url(#hazeg)" opacity="0.55"/>
<circle cx="431.3" cy="281.8" r="32.6" fill="url(#hazeg)" opacity="0.8"/>
<circle cx="399" cy="322.6" r="29.4" fill="url(#hazeg)" opacity="0.8"/>
<circle cx="436.5" cy="357.2" r="31.5" fill="url(#hazeg)" opacity="0.8"/>
<circle cx="439.3" cy="322.6" r="25.2" fill="url(#hazeg)" opacity="0.55"/>
<circle cx="472.5" cy="372.5" r="29.4" fill="url(#hazeg)" opacity="0.8"/>
<circle cx="453" cy="405.8" r="29.4" fill="url(#hazeg)" opacity="0.8"/>
<circle cx="494.7" cy="405.8" r="27.3" fill="url(#hazeg)" opacity="0.8"/>
<circle cx="485" cy="283.7" r="25.2" fill="url(#hazeg)" opacity="0.55"/>
<circle cx="697.7" cy="129.6" r="34.6" fill="url(#hazeg)" opacity="0.8"/>
<circle cx="572.9" cy="181" r="33.6" fill="url(#hazeg)" opacity="0.8"/>
<circle cx="581.2" cy="215.6" r="27.3" fill="url(#hazeg)" opacity="0.8"/>
<circle cx="527" cy="197.6" r="25.2" fill="url(#hazeg)" opacity="0.55"/>
<circle cx="509" cy="168.4" r="23.1" fill="url(#hazeg)" opacity="0.55"/>
<circle cx="668" cy="220.6" r="31.5" fill="url(#hazeg)" opacity="0.8"/>
<circle cx="639.5" cy="247.5" r="27.3" fill="url(#hazeg)" opacity="0.8"/>
<circle cx="616.6" cy="227.6" r="25.2" fill="url(#hazeg)" opacity="0.55"/>
<circle cx="580.6" cy="244.5" r="21.0" fill="url(#hazeg)" opacity="0.55"/>
<circle cx="618.8" cy="183" r="21.0" fill="url(#hazeg)" opacity="0.55"/>
<circle cx="749" cy="168.4" r="27.3" fill="url(#hazeg)" opacity="0.8"/>
<circle cx="753.8" cy="202.3" r="27.3" fill="url(#hazeg)" opacity="0.8"/>
<circle cx="720" cy="188" r="23.1" fill="url(#hazeg)" opacity="0.55"/>
<circle cx="681" cy="168" r="21.0" fill="url(#hazeg)" opacity="0.55"/>
<circle cx="635" cy="155" r="21.0" fill="url(#hazeg)" opacity="0.55"/>
<circle cx="545" cy="170" r="21.0" fill="url(#hazeg)" opacity="0.55"/>
<circle cx="600" cy="160" r="18.9" fill="url(#hazeg)" opacity="0.55"/>
<circle cx="592.3" cy="276.8" r="23.1" fill="url(#hazeg)" opacity="0.55"/>
<circle cx="647" cy="280.4" r="25.2" fill="url(#hazeg)" opacity="0.8"/>
<circle cx="729" cy="271.3" r="33.6" fill="url(#hazeg)" opacity="0.8"/>
<circle cx="746.3" cy="297.6" r="27.3" fill="url(#hazeg)" opacity="0.8"/>
<circle cx="667.2" cy="303.2" r="29.4" fill="url(#hazeg)" opacity="0.8"/>
<circle cx="546.5" cy="335" r="39.9" fill="url(#hazeg)" opacity="0.8"/>
<circle cx="598.7" cy="356.4" r="23.1" fill="url(#hazeg)" opacity="0.8"/>
<circle cx="660.8" cy="364.2" r="31.5" fill="url(#hazeg)" opacity="0.8"/>
<circle cx="643.6" cy="398.9" r="27.3" fill="url(#hazeg)" opacity="0.8"/>
<circle cx="518.8" cy="350.3" r="25.2" fill="url(#hazeg)" opacity="0.8"/>
<circle cx="502" cy="403" r="23.1" fill="url(#hazeg)" opacity="0.8"/>
<circle cx="720" cy="378" r="23.1" fill="url(#hazeg)" opacity="0.55"/>
<circle cx="575" cy="405" r="21.0" fill="url(#hazeg)" opacity="0.55"/>
<circle cx="535" cy="375" r="18.9" fill="url(#hazeg)" opacity="0.55"/>
<circle cx="700" cy="330" r="18.9" fill="url(#hazeg)" opacity="0.55"/>
<circle cx="770" cy="330" r="18.9" fill="url(#hazeg)" opacity="0.55"/>
<circle cx="802" cy="132" r="25.2" fill="url(#hazeg)" opacity="0.55"/>
<circle cx="813" cy="96" r="25.2" fill="url(#hazeg)" opacity="0.8"/>
<circle cx="866.8" cy="161.5" r="29.4" fill="url(#hazeg)" opacity="0.8"/>
<circle cx="786.4" cy="200.3" r="27.3" fill="url(#hazeg)" opacity="0.8"/>
<circle cx="841" cy="199" r="25.2" fill="url(#hazeg)" opacity="0.55"/>
<circle cx="806" cy="240" r="25.2" fill="url(#hazeg)" opacity="0.8"/>
<circle cx="810" cy="266" r="25.2" fill="url(#hazeg)" opacity="0.8"/>
<circle cx="854" cy="274" r="21.0" fill="url(#hazeg)" opacity="0.55"/>
<circle cx="859" cy="278" r="21.0" fill="url(#hazeg)" opacity="0.55"/>
<circle cx="780" cy="270" r="18.9" fill="url(#hazeg)" opacity="0.55"/>
<circle cx="830" cy="175" r="18.9" fill="url(#hazeg)" opacity="0.55"/>
<circle cx="834.7" cy="293.4" r="35.7" fill="url(#hazeg)" opacity="0.8"/>
<circle cx="456.8" cy="271.3" r="35.7" fill="url(#hazeg)" opacity="0.8"/>
<circle cx="446" cy="278" r="46.2" fill="url(#hazeg)" opacity="0.55"/>
<circle cx="586.1" cy="339.8" r="42.0" fill="url(#hazeg)" opacity="0.8"/>
<circle cx="873" cy="205.8" r="32.6" fill="url(#hazeg)" opacity="0.8"/>
<circle cx="565" cy="345" r="54.6" fill="url(#hazeg)" opacity="0.55"/>
<circle cx="602" cy="362" r="42.0" fill="url(#hazeg)" opacity="0.55"/>
</g>
<path d="M943.6 88.0C943.5 88.9 943.1 91.7 942.9 93.5C942.7 95.4 942.3 97.2 942.2 99.0C942.0 100.9 942.2 102.8 942.0 104.6C941.8 106.4 941.4 108.0 941.1 109.7C940.8 111.4 940.5 113.1 940.4 114.8C940.3 116.5 940.6 117.5 940.5 120.0C940.4 122.5 939.9 127.1 939.5 129.6C939.1 132.1 938.3 133.0 937.9 134.7C937.5 136.5 937.4 138.2 937.0 140.0C936.6 141.8 935.8 143.8 935.4 145.8C935.1 147.8 934.9 149.4 935.0 151.8C935.1 154.2 935.5 157.2 936.0 160.0C936.5 162.8 938.3 165.6 938.0 168.4C937.7 171.2 935.6 174.4 934.0 177.0C932.4 179.6 930.6 183.0 928.4 183.7C926.2 184.4 923.3 181.2 921.0 181.0C918.7 180.8 917.0 182.0 914.5 182.3C912.0 182.6 908.8 182.6 906.0 183.0C903.2 183.4 900.2 184.0 898.0 185.0C895.8 186.0 894.4 187.6 893.0 189.0C891.6 190.4 890.8 191.7 889.6 193.4C888.4 195.1 886.9 197.2 886.0 199.0C885.1 200.8 885.0 202.3 884.0 204.5C883.0 206.7 880.8 209.7 880.0 212.0C879.2 214.3 879.6 216.1 879.1 218.1C878.6 220.1 877.5 222.1 877.0 223.9C876.5 225.7 876.4 227.3 876.0 229.0C875.7 230.6 875.3 231.6 875.0 234.0C874.7 236.4 874.5 240.5 874.3 243.3C874.1 246.1 873.7 248.2 873.7 250.7C873.7 253.1 874.2 255.6 874.3 258.0C874.4 260.4 874.2 263.0 874.0 265.0C873.8 267.0 874.3 268.5 873.0 270.0C871.7 271.5 868.3 272.9 866.0 274.0C863.7 275.1 861.0 275.5 859.0 276.8C857.0 278.1 855.4 280.4 854.0 282.0C852.6 283.6 852.0 285.7 850.7 286.5C849.4 287.3 847.4 286.5 846.0 287.0C844.6 287.5 842.9 288.0 842.4 289.3C841.9 290.6 842.6 293.1 843.0 295.0C843.4 296.9 843.7 298.9 845.0 300.4C846.3 301.9 849.2 302.9 851.0 304.0C852.8 305.1 854.5 305.8 856.0 307.3C857.5 308.8 858.8 310.9 860.0 313.0C861.2 315.1 862.2 317.6 863.0 319.8C863.8 322.0 864.3 323.9 865.0 326.0C865.7 328.1 866.1 330.1 867.4 332.3C868.7 334.5 871.1 336.9 873.0 339.0C874.9 341.1 877.0 342.7 878.5 344.7C880.0 346.7 880.9 348.9 882.0 351.0C883.1 353.1 884.6 355.4 885.4 357.2C886.2 359.0 886.6 360.4 887.0 362.0C887.4 363.6 888.3 365.5 888.0 367.0C887.7 368.5 885.9 369.7 885.0 371.0C884.1 372.3 882.8 373.3 882.6 375.0C882.4 376.7 883.3 379.1 884.0 381.0C884.7 382.9 885.8 384.5 886.8 386.3C887.8 388.1 888.9 390.1 890.0 392.0C891.1 393.9 892.0 395.4 893.7 397.4C895.4 399.4 898.0 401.7 900.0 404.0C902.0 406.3 904.5 409.1 906.0 411.0C907.5 412.9 907.8 413.8 908.8 415.1C909.8 416.5 910.6 417.2 912.0 419.0C913.4 420.8 915.8 424.2 917.0 426.0C918.2 427.8 918.7 429.3 919.0 430.0 L1035 430 L1035 80 L943.6 80Z" fill="#aad3df"/>
<path d="M868 206l6-1 8 0-1 2-7 1z" fill="#aad3df"/><path d="M836 288l6 0 1 4-5 2-3-3z" fill="#aad3df"/><path d="M838 298l6 1-1 4-5-1z" fill="#aad3df"/>
<ellipse cx="478" cy="300" rx="3.5" ry="1.5" transform="rotate(60 478 300)" fill="#aad3df"/>
<ellipse cx="468" cy="318" rx="2" ry="1" transform="rotate(0 468 318)" fill="#aad3df"/>
<ellipse cx="523" cy="383" rx="3" ry="1.2" transform="rotate(30 523 383)" fill="#aad3df"/>
<ellipse cx="540" cy="395" rx="2.5" ry="1" transform="rotate(-20 540 395)" fill="#aad3df"/>
<ellipse cx="585" cy="270" rx="3" ry="1" transform="rotate(10 585 270)" fill="#aad3df"/>
<ellipse cx="660" cy="290" rx="3" ry="1" transform="rotate(0 660 290)" fill="#aad3df"/>
<ellipse cx="705" cy="290" rx="3.5" ry="1.2" transform="rotate(20 705 290)" fill="#aad3df"/>
<ellipse cx="620" cy="365" rx="2.5" ry="1" transform="rotate(0 620 365)" fill="#aad3df"/>
<ellipse cx="650" cy="382" rx="3" ry="1.2" transform="rotate(40 650 382)" fill="#aad3df"/>
<ellipse cx="330" cy="265" rx="1.5" ry="3" transform="rotate(0 330 265)" fill="#aad3df"/>
<ellipse cx="742" cy="140" rx="2" ry="1" transform="rotate(0 742 140)" fill="#aad3df"/>
<ellipse cx="800" cy="215" rx="2" ry="1" transform="rotate(0 800 215)" fill="#aad3df"/>
<g fill="none" stroke="#e48b9a" stroke-width="1.15" stroke-linejoin="round" stroke-linecap="round" opacity=".95">
<path d="M246.5 86.0C247.4 86.5 250.0 88.0 251.9 88.8C253.7 89.6 255.6 89.3 257.6 90.8C259.6 92.3 261.9 95.7 264.0 98.0C266.1 100.3 268.4 102.7 270.0 104.6C271.6 106.5 272.5 107.9 273.8 109.4C275.2 111.0 276.9 112.4 278.0 114.0C279.1 115.6 279.7 117.5 280.7 119.2C281.7 120.8 283.3 122.3 284.0 124.0C284.7 125.7 284.5 127.5 285.0 129.1C285.5 130.8 286.3 131.6 287.0 134.0C287.7 136.4 288.4 141.2 289.5 143.5C290.6 145.8 292.2 146.5 293.5 148.1C294.7 149.7 295.7 151.3 297.0 153.0C298.3 154.7 299.9 156.4 301.4 158.1C302.9 159.8 304.7 161.5 306.0 163.0C307.3 164.5 308.0 166.0 309.1 167.3C310.3 168.7 311.8 169.6 313.0 171.0C314.2 172.4 315.0 174.1 316.2 175.5C317.3 177.0 318.7 177.6 320.0 179.5C321.3 181.4 322.8 184.7 324.0 187.0C325.2 189.3 326.5 192.3 327.0 193.4"/>
<path d="M327.0 193.4C328.5 193.8 333.0 195.3 336.0 196.0C339.0 196.7 342.3 197.1 345.0 197.6C347.7 198.1 349.7 198.3 352.0 199.0C354.3 199.7 356.3 200.9 358.8 201.7C361.3 202.5 364.2 203.3 367.0 204.0C369.8 204.7 372.8 204.8 375.5 206.0C378.2 207.2 380.7 209.2 383.0 211.0C385.3 212.8 387.1 215.0 389.3 217.0C391.5 219.0 393.7 220.9 396.0 223.0C398.3 225.1 400.9 227.7 403.2 229.5C405.5 231.3 407.9 231.8 410.0 233.6C412.1 235.3 413.9 237.9 416.0 240.0C418.1 242.1 420.6 244.7 422.6 246.0C424.6 247.3 426.2 247.0 427.9 247.6C429.7 248.3 431.2 249.2 433.0 250.0C434.8 250.8 436.9 251.7 438.8 252.4C440.8 253.1 442.8 252.8 444.8 254.4C446.8 256.0 449.5 260.0 451.0 262.0C452.5 264.0 452.9 265.1 453.9 266.6C454.9 268.1 456.5 270.3 457.0 271.0"/>
<path d="M327.0 193.4C325.8 194.3 321.1 197.2 320.0 199.0C318.9 200.8 320.1 202.4 320.5 204.1C320.8 205.8 321.4 207.4 322.0 209.0C322.6 210.6 323.6 212.0 324.2 213.5C324.7 215.1 324.7 216.8 325.5 218.4C326.3 220.0 327.8 221.3 328.7 222.9C329.7 224.5 330.2 226.3 331.0 228.0C331.8 229.7 332.3 231.6 333.3 233.2C334.2 234.8 335.5 236.2 336.6 237.8C337.7 239.4 338.7 241.0 339.6 242.7C340.5 244.4 341.1 246.3 342.0 248.0C342.9 249.7 344.3 251.1 345.2 252.8C346.2 254.4 347.6 255.8 347.7 258.0C347.8 260.2 346.9 263.6 346.0 266.0C345.1 268.4 343.4 270.9 342.0 272.6C340.6 274.3 339.2 274.9 337.9 276.2C336.5 277.4 335.3 278.8 334.0 280.0C332.7 281.2 331.3 282.3 329.9 283.4C328.4 284.5 327.1 284.9 325.5 286.5C323.9 288.1 321.9 290.7 320.0 293.0C318.1 295.3 315.6 298.3 314.4 300.4C313.2 302.5 313.1 303.8 312.7 305.6C312.3 307.4 312.2 309.1 312.0 311.0C311.8 312.9 311.8 314.9 311.5 316.8C311.2 318.8 310.7 320.6 310.3 322.6C309.9 324.6 309.3 326.7 309.1 328.7C308.9 330.8 309.1 332.9 309.0 335.0C308.9 337.1 308.7 339.2 308.5 341.3C308.2 343.4 308.0 345.3 307.5 347.5C307.0 349.7 306.0 352.1 305.3 354.4C304.6 356.7 303.6 360.2 303.3 361.4"/>
<path d="M303.3 361.4C302.1 361.0 298.8 359.5 296.0 359.0C293.2 358.5 289.1 358.9 286.7 358.6C284.3 358.3 283.2 357.6 281.4 357.3C279.6 357.0 277.8 357.0 276.0 357.0C274.2 357.0 272.6 357.1 270.9 357.5C269.2 357.8 267.7 358.9 266.0 359.0C264.3 359.1 262.4 358.2 260.5 358.0C258.7 357.9 256.8 358.0 255.0 358.0C253.2 358.0 251.3 358.2 249.5 358.0C247.6 357.8 244.9 357.2 244.0 357.0"/>
<path d="M286.7 358.6C287.4 359.2 289.3 361.3 290.7 362.5C292.1 363.7 293.4 364.9 295.0 366.0C296.6 367.1 298.5 368.4 300.3 369.4C302.1 370.4 304.2 371.1 306.0 372.0C307.8 372.9 309.5 373.7 311.2 374.7C312.9 375.7 314.6 376.8 316.0 378.0C317.4 379.2 318.3 380.8 319.6 381.9C320.9 383.1 322.5 384.0 324.0 385.0C325.5 386.0 327.2 387.0 328.7 388.2C330.2 389.4 331.3 391.0 333.0 392.0C334.7 393.0 336.9 393.5 338.9 394.2C340.9 394.9 344.0 395.7 345.0 396.0"/>
<path d="M259.0 270.0C259.3 270.8 260.1 273.3 260.6 275.0C261.1 276.6 261.4 277.6 262.0 280.0C262.6 282.4 264.3 286.9 264.5 289.3C264.7 291.7 263.5 292.8 263.2 294.6C263.0 296.4 263.2 298.1 263.0 300.0C262.8 301.9 262.2 303.8 261.9 305.7C261.7 307.6 261.4 309.7 261.7 311.5C262.0 313.3 263.1 314.9 263.7 316.6C264.2 318.4 264.4 320.1 265.0 322.0C265.6 323.9 266.3 326.1 267.1 328.0C267.9 330.0 268.9 331.7 270.0 333.7C271.1 335.7 272.5 337.9 273.9 339.9C275.2 342.0 276.8 344.3 278.0 346.0C279.2 347.7 280.5 348.4 281.4 349.9C282.2 351.3 282.5 353.3 283.4 354.7C284.2 356.2 286.1 358.0 286.7 358.6"/>
<path d="M250.0 262.0C250.8 262.7 253.5 264.7 255.0 266.0C256.5 267.3 258.3 269.3 259.0 270.0"/>
<path d="M303.3 361.4C303.0 362.3 302.0 364.9 301.5 366.6C300.9 368.4 300.1 370.1 300.0 372.0C299.9 373.9 300.4 376.0 300.8 378.0C301.1 380.0 301.5 382.0 302.0 384.0C302.5 386.0 302.8 388.2 303.5 390.2C304.1 392.2 305.0 394.1 306.0 396.0C307.0 397.9 308.3 399.8 309.3 401.8C310.3 403.8 311.0 406.0 312.0 408.0C313.0 410.0 314.5 411.8 315.5 413.8C316.5 415.8 317.1 418.3 318.0 420.0C318.9 421.7 319.7 422.9 320.7 424.2C321.7 425.6 323.4 427.4 324.0 428.0"/>
<path d="M457.0 271.0C457.8 271.4 460.3 272.6 461.8 273.6C463.3 274.6 464.5 276.2 466.0 277.0C467.5 277.8 469.3 277.9 470.8 278.6C472.4 279.3 473.6 280.1 475.3 281.0C477.0 281.9 479.1 283.1 481.1 284.1C483.0 285.1 485.1 285.9 487.0 287.0C488.9 288.1 490.9 289.3 492.7 290.6C494.6 291.9 496.4 293.3 498.0 294.8C499.6 296.3 501.0 297.9 502.3 299.6C503.7 301.3 504.7 303.3 506.0 305.0C507.3 306.7 508.9 308.1 510.3 309.6C511.8 311.2 513.1 313.1 514.6 314.3C516.1 315.5 517.8 315.8 519.3 316.6C520.9 317.3 522.4 318.3 524.0 319.0C525.6 319.7 527.4 319.9 529.1 320.5C530.8 321.1 532.0 321.9 534.0 322.6C536.0 323.3 538.7 323.9 541.0 324.7C543.4 325.4 545.7 326.2 548.0 327.0C550.3 327.8 552.5 328.7 554.8 329.3C557.1 330.0 559.5 330.6 561.8 330.9C564.1 331.2 566.2 330.8 568.4 331.0C570.6 331.2 572.7 331.9 575.0 332.0C577.3 332.1 579.8 331.7 582.3 331.8C584.7 331.8 587.2 332.3 589.5 332.3C591.8 332.3 594.0 331.6 596.2 331.6C598.5 331.5 600.7 332.1 603.0 332.0C605.3 331.9 607.7 331.3 610.1 331.1C612.5 331.0 616.1 330.9 617.3 330.9"/>
<path d="M617.3 330.9C618.4 331.2 621.7 332.1 624.0 333.0C626.3 333.9 628.5 335.2 631.0 336.4C633.5 337.6 636.9 339.0 639.0 340.0C641.1 341.0 641.9 341.7 643.4 342.5C644.8 343.3 646.1 344.0 647.8 344.8C649.5 345.6 651.5 346.4 653.3 347.4C655.1 348.3 656.6 349.7 658.4 350.6C660.2 351.6 662.1 352.2 664.0 353.0C665.9 353.8 667.9 354.6 669.8 355.6C671.7 356.5 673.5 357.6 675.3 358.6C677.2 359.6 679.3 360.7 681.0 361.4C682.7 362.1 684.2 362.5 685.7 363.1C687.3 363.7 688.8 364.4 690.4 365.0C691.9 365.7 693.1 366.1 695.0 367.0C696.9 367.9 699.4 369.4 701.7 370.3C704.0 371.2 706.7 371.5 708.8 372.5C710.9 373.5 712.5 375.0 714.2 376.4C715.9 377.8 717.4 379.6 719.0 381.0C720.6 382.4 722.1 383.6 723.6 384.9C725.2 386.3 726.6 388.1 728.2 389.0C729.8 389.9 731.6 389.7 733.2 390.2C734.8 390.7 736.4 391.5 738.0 392.0C739.6 392.5 741.3 392.7 742.9 393.2C744.5 393.6 745.5 393.9 747.7 394.7C749.9 395.5 753.3 396.9 756.0 398.0C758.7 399.1 762.7 400.5 764.0 401.0"/>
<path d="M617.3 330.9C618.4 330.7 621.5 330.0 623.7 329.5C625.8 329.0 627.9 328.5 630.0 328.0C632.1 327.5 634.0 326.9 636.0 326.4C638.1 326.0 640.3 325.9 642.2 325.3C644.1 324.7 645.6 323.3 647.4 322.6C649.2 321.9 651.1 321.7 653.0 321.0C654.9 320.3 656.9 319.4 658.8 318.5C660.7 317.6 662.3 316.4 664.4 315.6C666.5 314.8 668.8 314.1 671.1 313.5C673.4 312.9 675.7 312.6 678.0 312.0C680.3 311.4 682.6 310.6 684.9 310.1C687.3 309.5 689.7 309.4 692.0 308.7C694.3 308.0 696.3 306.7 698.5 305.7C700.6 304.8 702.9 303.9 705.0 303.0C707.1 302.1 709.1 301.4 711.1 300.5C713.1 299.6 715.1 298.2 717.0 297.6C718.9 297.0 720.8 297.3 722.6 296.9C724.5 296.4 726.2 295.5 728.0 295.0C729.8 294.5 731.8 294.4 733.6 294.2C735.5 293.9 737.4 293.5 739.3 293.4C741.2 293.3 743.3 293.5 745.2 293.3C747.2 293.1 748.9 292.2 751.0 292.0C753.1 291.8 755.4 292.3 757.5 292.1C759.7 291.9 761.9 291.5 764.0 291.0C766.1 290.5 768.3 289.7 770.4 289.2C772.6 288.7 774.9 288.5 777.0 288.0C779.1 287.5 781.1 286.5 783.2 286.0C785.3 285.5 787.5 285.3 789.7 285.0C791.9 284.7 794.1 284.3 796.3 284.1C798.5 283.9 800.7 284.0 803.0 284.0C805.3 284.0 807.8 284.3 810.3 284.3C812.7 284.2 814.9 283.2 817.5 283.7C820.1 284.2 823.2 285.6 826.0 287.0C828.8 288.4 832.7 291.2 834.0 292.0"/>
<path d="M452.0 280.0C450.8 280.3 446.9 281.4 445.0 282.0C443.1 282.6 441.4 282.2 440.7 283.7C440.0 285.2 441.1 288.5 440.9 290.9C440.8 293.3 440.1 295.7 440.0 298.0C439.9 300.3 440.2 302.5 440.1 304.8C440.0 307.0 439.7 309.2 439.3 311.5C438.9 313.8 438.3 316.0 437.8 318.3C437.2 320.5 436.6 322.7 436.0 325.0C435.4 327.3 434.6 329.7 433.9 332.0C433.3 334.4 432.3 336.5 432.3 339.2C432.3 341.9 433.3 345.0 434.0 348.0C434.7 351.0 435.8 354.6 436.5 357.2C437.2 359.8 437.6 361.3 438.1 363.4C438.6 365.5 439.0 367.5 439.3 369.6C439.6 371.8 439.6 373.9 440.0 376.0C440.4 378.1 441.4 380.1 441.9 382.2C442.4 384.2 442.4 386.5 442.9 388.5C443.4 390.6 444.2 392.8 444.8 394.7C445.4 396.6 446.2 398.0 446.6 399.7C447.0 401.4 446.9 403.3 447.3 405.0C447.7 406.7 448.5 408.2 449.0 410.0C449.5 411.8 449.6 414.1 450.1 416.0C450.7 418.0 451.6 419.9 452.1 421.9C452.6 423.9 452.8 427.0 453.0 428.0"/>
<path d="M457.0 271.0C458.5 270.7 462.9 269.7 466.0 269.0C469.1 268.3 472.7 267.8 475.3 267.0C477.9 266.2 479.3 264.9 481.5 264.0C483.6 263.2 485.9 262.7 488.0 262.0C490.1 261.3 491.9 260.6 493.9 260.1C495.9 259.5 498.5 259.7 500.0 258.8C501.5 257.9 501.7 255.8 502.8 254.4C503.9 253.0 505.4 251.9 506.4 250.5C507.4 249.1 507.6 247.4 509.0 246.0C510.4 244.6 512.7 243.3 514.5 241.9C516.3 240.5 518.3 239.3 520.0 237.8C521.7 236.3 523.0 234.7 524.4 233.1C525.9 231.4 526.9 228.9 528.5 228.0C530.1 227.1 532.2 227.5 534.0 227.5C535.9 227.5 538.7 227.9 539.6 228.0"/>
<path d="M808.0 197.0C809.1 197.2 812.5 197.5 814.7 198.0C816.9 198.5 818.7 199.4 821.0 200.0C823.3 200.6 825.9 201.3 828.6 201.7C831.3 202.1 834.3 202.3 837.0 202.5C839.7 202.7 842.8 202.8 845.0 203.0C847.2 203.2 848.7 203.4 850.5 203.6C852.3 203.8 854.1 203.9 856.0 204.0C857.9 204.1 859.8 204.3 861.7 204.4C863.6 204.5 865.3 204.2 867.4 204.5C869.5 204.8 872.9 205.8 874.0 206.0"/>
<path d="M525.0 86.0C526.0 86.8 529.0 89.9 531.3 90.8C533.6 91.7 536.2 91.2 538.6 91.4C541.1 91.6 543.9 91.8 546.0 92.0C548.1 92.2 549.5 92.3 551.3 92.4C553.0 92.6 554.8 93.0 556.5 93.1C558.3 93.2 560.0 92.9 561.8 93.0C563.6 93.1 565.4 93.4 567.2 93.5C569.0 93.6 570.8 93.5 572.6 93.5C574.4 93.4 576.2 93.2 578.0 93.0C579.8 92.8 581.8 92.5 583.7 92.5C585.6 92.5 587.5 93.0 589.4 92.9C591.3 92.8 593.1 91.9 595.0 92.0C596.9 92.1 598.8 93.1 600.7 93.6C602.6 94.1 604.5 94.5 606.4 95.1C608.3 95.7 610.0 96.4 612.0 97.0C614.0 97.6 616.2 97.9 618.2 98.5C620.2 99.2 622.0 100.3 624.0 101.0C626.0 101.8 628.0 102.4 630.0 103.0C632.0 103.6 634.1 103.9 636.1 104.5C638.1 105.1 640.0 105.9 642.0 106.6C643.9 107.3 645.9 108.9 647.8 108.8C649.7 108.7 651.6 107.0 653.5 106.0C655.3 105.1 657.1 104.0 659.0 103.0C660.9 102.0 662.8 101.0 664.7 99.9C666.5 98.8 668.6 97.7 670.0 96.3C671.4 94.9 672.3 93.0 673.3 91.3C674.3 89.6 675.5 86.9 676.0 86.0"/>
<path d="M699.0 86.0C699.0 86.9 699.0 89.6 698.9 91.3C698.9 93.1 698.7 94.9 698.7 96.7C698.7 98.4 699.1 100.3 699.0 102.0C698.9 103.7 698.4 105.3 698.2 107.0C698.0 108.6 698.0 110.2 698.0 112.0C698.0 113.8 697.9 116.0 698.1 118.0C698.2 120.0 698.8 123.0 699.0 124.0"/>
<path d="M428.2 104.6C429.3 104.2 432.7 102.9 435.0 102.1C437.3 101.3 439.6 100.6 442.0 100.0C444.4 99.4 446.8 99.3 449.1 98.7C451.5 98.1 453.9 96.9 456.0 96.3C458.1 95.7 459.8 95.7 461.7 95.2C463.5 94.6 465.2 93.6 467.0 93.0C468.8 92.4 470.8 92.3 472.7 91.7C474.5 91.1 475.8 90.3 478.0 89.4C480.2 88.5 484.7 86.6 486.0 86.0"/>
<path d="M917.3 88.0C918.2 88.3 920.8 89.2 922.6 89.7C924.4 90.2 926.1 90.8 928.0 91.0C929.9 91.2 931.9 90.8 933.8 91.0C935.7 91.2 938.5 91.8 939.5 92.0"/>
<path d="M939.5 92.0C939.6 93.1 939.8 96.4 940.1 98.5C940.3 100.7 941.0 102.8 941.0 105.0C941.0 107.2 940.4 109.3 940.1 111.5C939.8 113.7 939.4 115.8 939.0 118.0C938.6 120.2 938.1 122.3 937.7 124.5C937.4 126.6 937.1 129.9 937.0 131.0"/>
<path d="M750.0 395.0C750.7 395.7 752.9 397.8 754.3 399.3C755.6 400.8 756.5 402.6 758.0 404.0C759.5 405.4 761.4 406.6 763.1 407.9C764.8 409.2 766.1 410.7 768.0 412.0C769.9 413.3 772.2 414.4 774.2 415.7C776.2 417.0 778.2 418.6 780.0 420.0C781.8 421.4 783.4 422.6 785.1 423.9C786.7 425.2 789.2 427.3 790.0 428.0"/>
<path d="M812.7 389.7C812.1 390.4 810.5 392.5 809.4 393.9C808.3 395.3 807.0 396.3 806.0 398.0C805.0 399.7 804.2 401.9 803.6 403.9C802.9 405.9 802.3 408.0 802.0 410.0C801.7 412.0 802.1 414.1 801.9 416.1C801.7 418.1 801.2 420.0 800.9 422.0C800.6 424.0 800.2 427.0 800.0 428.0"/>
</g>
<g fill="none" stroke="#b29dbd" stroke-width=".9" stroke-linejoin="round" opacity=".8">
<path d="M542.0 86.0L542.0 93.5L540.3 99.0L539.1 104.6L537.0 110.0L538.1 117.0L539.6 124.0L537.9 129.1L535.3 133.8L532.4 138.3L531.0 143.5"/>
<path d="M595.0 86.0L595.0 93.5L594.5 99.1L593.0 104.5L592.0 110.0L586.9 114.7L581.0 118.5L582.4 124.2L585.3 129.3L586.8 135.0L588.1 141.0L589.5 147.0"/>
<path d="M667.0 86.0L666.1 92.2L667.8 98.4L667.0 104.6L665.6 111.0L665.0 117.5L664.0 124.0L666.2 129.3L669.9 133.7L672.0 139.0L675.5 143.5"/>
<path d="M764.0 100.0L767.2 96.1L770.0 92.0L774.4 89.6L778.0 86.0"/>
<path d="M884.0 126.8L887.6 122.8L890.0 118.0L894.7 114.4L900.0 112.0L905.0 110.8L910.0 109.3L915.0 108.0L920.5 104.6L925.0 100.0L928.3 94.9L932.0 90.0L935.0 86.0"/>
<path d="M417.0 118.0L421.7 120.0L425.2 124.0L430.0 126.0L432.6 130.4L433.6 135.5L436.0 140.0L433.4 145.8L432.0 152.0L435.7 156.3L440.0 160.0L438.3 165.1L436.0 170.0L432.2 174.2L428.0 178.0L422.3 181.7L417.0 186.0L412.0 193.0"/>
<path d="M436.0 170.0L441.9 171.8L448.0 172.0L455.0 174.1L462.0 176.0L466.0 173.0L470.0 170.0L475.0 169.0L480.0 168.0L483.4 162.2L486.0 156.0L485.9 150.3L484.0 145.0L490.0 138.0L498.0 134.0"/>
<path d="M470.0 170.0L472.1 174.8L472.5 180.0L474.0 185.0L471.8 190.9L468.0 196.0L470.0 203.0L472.0 210.0L475.3 215.5L480.0 220.0L485.2 222.7L490.0 226.0L498.0 225.3"/>
<path d="M428.0 210.0L436.0 214.0L440.9 218.1L446.0 222.0L452.2 223.5L458.0 226.0L462.9 229.2L468.0 232.0L474.0 232.8L480.0 232.0L484.6 228.3L490.0 226.0"/>
<path d="M534.0 147.6L528.7 151.2L523.0 154.0L521.6 161.5L519.4 167.3L518.0 173.3L517.4 179.5L517.3 186.1L514.9 192.4L514.6 199.0L519.9 204.1L525.7 208.7L531.3 207.6L536.6 205.0L542.5 205.1L547.9 202.9L553.5 201.7L558.6 201.4L563.5 200.1L568.5 199.7L573.5 198.8L578.4 197.6L583.5 196.8L588.6 197.0L593.8 197.0L598.9 196.4L604.0 196.0L609.0 194.8L614.5 186.5L618.8 183.5L623.9 182.1L628.4 179.5L625.6 171.2L630.0 163.0L632.6 158.2L634.0 153.0"/>
<path d="M525.7 208.7L524.7 214.9L523.0 221.0L518.3 222.8L513.8 225.2L509.0 226.7L503.6 225.5L498.0 225.3"/>
<path d="M498.0 225.3L499.0 230.6L500.0 236.0L502.9 240.1L506.0 244.0L502.0 252.0L508.0 258.0"/>
<path d="M609.0 194.8L614.2 197.6L620.0 199.0L622.0 204.4L622.8 210.0L617.1 210.1L611.7 212.3L606.0 212.8L605.2 218.4L603.6 223.8L603.4 229.5L607.3 233.9L610.8 238.7L614.5 243.3L613.2 248.4L610.1 252.8L609.0 258.0L612.0 262.0L614.5 267.0"/>
<path d="M653.0 156.0L658.9 160.0L659.9 165.6L661.1 171.1L661.7 176.8L667.0 179.8L672.8 181.4L678.3 183.7L684.9 184.4L691.1 186.9L697.7 187.9L701.1 191.6L703.3 196.2L706.5 202.9L708.8 210.0L710.3 215.4L710.0 221.0L710.3 226.6L711.6 232.0L709.5 236.6L708.3 241.5L706.0 246.0L706.8 252.1L708.8 258.0"/>
<path d="M709.0 115.7L712.0 125.0L713.4 130.0L714.4 135.1L716.0 140.0L716.7 147.3L717.0 154.6L717.8 161.7L720.0 168.4L715.7 171.1L710.3 171.3L706.0 174.0L705.0 179.5L704.1 185.0L703.4 190.6L703.3 196.2"/>
<path d="M733.8 104.6L735.3 110.1L736.5 115.7L738.2 120.4L738.7 125.5L740.7 130.1L742.0 135.0L740.6 141.3L739.3 147.6L733.6 149.2L728.0 151.0L722.6 153.1L717.0 154.6"/>
<path d="M720.0 168.4L725.0 176.0L731.0 182.3L736.7 182.4L742.1 184.0L747.6 185.0L753.0 183.6L758.5 183.1L764.0 182.3L772.0 178.0L775.7 173.7L780.0 170.0L785.2 168.6L790.0 166.0L794.1 162.1L798.0 158.0L802.3 154.3L806.0 150.0L809.7 145.4L812.0 140.0L817.0 137.0L822.0 134.0L826.0 131.0L830.0 128.0L833.5 123.5L838.0 120.0L842.3 117.4L846.0 114.0L850.0 109.9L855.0 107.0"/>
<path d="M747.6 185.0L746.5 190.7L744.0 196.0L739.7 199.7L736.0 204.0L731.4 207.4L728.0 212.0L725.1 217.1L722.0 222.0L716.2 226.4L711.6 232.0"/>
<path d="M764.0 182.3L766.6 187.4L770.0 192.0L768.2 197.9L768.0 204.0L770.6 209.2L774.0 214.0L778.6 217.6L784.0 220.0L790.1 220.3L796.0 222.0L801.1 220.1L806.0 218.0L809.9 213.9L814.0 210.0L812.6 204.1L812.0 198.0L815.5 194.4L818.0 190.0L821.8 186.8L826.0 184.0L825.8 178.8L824.0 174.0L826.8 169.9L830.0 166.0L836.0 164.1L842.0 162.0L846.8 164.5L852.0 166.0L856.6 171.4L862.0 176.0L867.3 177.2L872.0 180.0L878.1 179.4L884.0 178.0L889.0 183.1L893.0 189.0"/>
<path d="M784.0 220.0L782.7 225.9L782.0 232.0L779.6 237.4L776.0 242.0L778.6 246.8L780.0 252.0L784.9 255.2L790.0 258.0L795.1 259.7L800.0 262.0L806.2 260.7L812.0 258.0L817.8 260.5L824.0 262.0L830.2 260.6L836.0 258.0L842.0 259.9L848.0 262.0L854.2 260.6L860.0 258.0L867.0 258.1L874.0 258.0"/>
<path d="M708.8 258.0L716.0 254.0L720.9 255.7L726.0 256.0L730.8 252.7L736.0 250.0L742.0 251.9L748.0 254.0L753.8 251.4L760.0 250.0L765.7 252.8L772.0 254.0L780.0 252.0"/>
<path d="M447.0 258.0L452.0 250.0L460.0 249.0L468.0 253.0L472.9 251.7L478.0 251.0L482.9 252.7L488.0 254.0L490.0 262.0L484.0 268.0L480.0 276.0L476.5 279.7L472.0 282.0L468.0 290.0L462.0 296.0L454.0 292.0L450.0 286.0L444.0 282.0"/>
<path d="M381.0 310.0L386.2 307.3L392.0 306.0L397.1 303.1L402.0 300.0L406.6 296.6L410.0 292.0L414.9 289.7L420.0 288.0L425.0 289.1L430.0 290.0L435.0 288.8L440.0 288.0L444.0 282.0"/>
<path d="M462.0 296.0L464.4 300.9L466.0 306.0L471.0 308.0L476.0 310.0L481.0 308.1L486.0 306.0L490.0 308.9L494.0 312.0L498.0 319.8L503.6 317.2L509.1 314.2L514.6 311.5L520.0 310.4L525.2 308.7L530.5 307.4L536.0 307.0L541.3 305.6L546.9 305.5L552.0 303.2L557.6 303.0"/>
<path d="M440.0 288.0L441.4 294.2L444.0 300.0L442.0 306.0L440.0 312.0L444.5 315.5L448.0 320.0L452.9 318.3L458.0 318.0L461.7 311.8L466.0 306.0"/>
<path d="M408.0 354.0L412.9 349.9L418.0 346.0L424.0 343.9L430.0 342.0L434.6 338.3L440.0 336.0L444.3 332.3L448.0 328.0L448.0 320.0"/>
<path d="M448.0 328.0L454.1 329.8L460.0 332.0L466.1 331.8L472.0 330.0L478.2 332.5L484.0 336.0L488.9 333.7L494.0 332.0L498.0 326.0"/>
<path d="M498.0 326.0L501.6 330.4L506.0 334.0L509.3 339.9L512.0 346.0L510.4 352.1L508.0 358.0L510.5 364.3L514.0 370.0L519.4 372.4L524.0 376.0L527.0 382.0L530.0 388.0L527.9 394.0L526.0 400.0L527.8 405.1L530.0 410.0L528.5 417.0"/>
<path d="M553.5 256.0L554.8 261.7L557.9 266.8L559.0 272.6L564.5 274.1L570.0 274.4L575.7 274.3L581.2 275.4L585.3 271.1L589.5 267.0L596.0 266.2L602.5 266.4L609.0 267.0L614.5 262.0"/>
<path d="M614.5 267.0L616.9 271.4L618.4 276.2L620.0 281.0L622.4 286.3L624.2 291.9L625.6 297.6L622.5 304.4L620.0 311.5L621.5 316.9L622.1 322.5L622.8 328.0L621.9 333.7L620.0 339.2L625.0 344.0L631.0 347.5L630.1 354.0L629.6 360.5L628.4 367.0L623.6 369.2L618.5 370.6L613.9 373.4L609.0 375.3L606.9 382.0L606.0 389.0L600.5 390.2L595.1 391.4L589.5 392.0L590.2 385.0L589.5 378.0L584.4 375.0L580.8 370.1L575.7 367.0L570.5 366.3L565.6 364.6L560.4 364.0L559.9 358.5L558.7 353.1L559.0 347.5L559.6 341.8L561.8 336.4L558.4 329.8L556.3 322.6L556.0 316.0L556.6 309.5L557.6 303.0L557.4 297.9L557.6 292.8L558.7 287.8L558.5 282.7L558.2 277.6L559.0 272.6"/>
<path d="M631.0 347.5L636.4 345.0L642.2 343.4L647.9 341.6L653.3 339.2L660.4 338.6L667.2 336.4L668.8 341.9L670.0 347.5L675.5 346.7L681.0 345.5L686.6 344.8L692.0 339.2L697.0 338.2L702.1 337.6L707.2 336.8L712.2 335.6L717.0 333.7L720.0 325.3L718.9 319.5L715.5 314.5L714.4 308.7L720.0 303.0"/>
<path d="M628.4 367.0L632.9 370.7L637.5 374.3L642.0 378.0L644.8 382.3L647.8 386.4L653.4 387.1L658.8 388.7L664.4 389.0L668.5 392.2L671.9 396.3L675.5 400.0L676.4 407.1L678.3 414.0L676.0 421.0"/>
<path d="M589.5 392.0L596.1 392.3L602.5 393.8L609.0 394.7L610.3 400.3L611.7 405.8L613.1 411.2L616.0 416.0L614.4 421.9L614.0 428.0"/>
<path d="M560.4 364.0L554.2 366.0L548.0 368.0L543.5 372.6L540.0 378.0L535.5 383.5L530.0 388.0"/>
<path d="M720.0 325.3L725.6 324.8L731.1 324.2L736.5 322.6L742.7 325.6L748.0 330.0L753.9 333.9L758.7 339.2L757.1 344.6L757.7 350.3L757.2 355.9L756.0 361.4L764.0 365.6"/>
<path d="M720.0 303.0L724.8 301.0L730.0 300.0L738.0 304.0L743.1 302.2L748.0 300.0L753.4 302.4L758.0 306.0L763.1 305.7L768.0 304.0L773.3 306.5L778.0 310.0L784.0 308.9L790.0 308.0L792.6 312.3L796.0 316.0L793.3 320.7L792.0 326.0L794.9 331.1L798.0 336.0L794.7 341.6L792.0 347.5"/>
<path d="M720.0 303.0L718.5 297.3L716.0 292.0L711.4 288.6L708.0 284.0L710.6 278.2L712.0 272.0L710.1 265.1L708.8 258.0"/>
<path d="M768.0 304.0L769.4 298.8L772.0 294.0L769.5 289.2L768.0 284.0L772.4 280.4L776.0 276.0L774.1 271.0L772.0 266.0L774.3 261.1L777.1 256.5L780.0 252.0"/>
<path d="M233.0 150.0L238.6 152.8L244.0 156.0L249.8 153.5L256.0 152.0L261.7 155.6L268.0 158.0L274.1 156.2L280.0 154.0L284.8 148.8L289.5 143.5"/>
<path d="M327.0 193.4L323.1 199.2L318.0 204.0L311.9 205.8L306.0 208.0L300.4 211.3L296.0 216.0L289.9 215.6L284.0 214.0L277.7 216.4L272.0 220.0L267.3 225.2L261.7 229.5"/>
<path d="M372.0 128.0L366.2 130.5L360.0 132.0L355.5 136.6L350.0 140.0L345.1 138.7L340.0 138.0L334.9 141.9L330.0 146.0L324.9 147.8L320.0 150.0L316.2 155.2L312.0 160.0L306.0 163.0"/>
<path d="M347.7 258.0L352.6 255.3L358.0 254.0L363.2 255.5L368.0 258.0L373.0 258.3L378.0 258.0"/>
<path d="M336.6 237.8L343.2 234.8L350.0 232.0L356.0 234.1L362.0 236.0L368.0 233.1L374.0 230.0L380.0 231.2L386.0 232.0L392.2 229.5L398.0 226.0L402.0 229.7L407.0 232.0"/>
<path d="M339.0 321.0L340.8 327.8L344.0 334.0L348.0 339.0L352.0 344.0L356.9 347.1L362.0 350.0L366.9 347.8L372.0 346.0L378.2 347.3L384.0 350.0L387.8 346.8L392.0 344.0"/>
<path d="M362.0 350.0L363.9 356.0L366.0 362.0L371.4 365.5L376.0 370.0L380.3 375.8L384.0 382.0L382.1 388.0L380.0 394.0L383.8 399.6L386.0 406.0L384.0 412.0L382.0 418.0L383.2 423.3L386.0 428.0"/>
<path d="M303.3 361.4L308.0 357.0L312.0 352.0L317.0 350.0L322.0 348.0L327.7 350.8L334.0 352.0L339.0 349.1L344.0 346.0L352.0 344.0"/>
<path d="M842.4 367.0L840.4 373.6L838.0 380.0L839.3 386.2L842.0 392.0L839.2 398.1L836.0 404.0L838.5 409.8L840.0 416.0L837.5 421.8L836.0 428.0"/>
</g>
<g fill="none" stroke="#a193c0" stroke-width="1.7" opacity=".85">
<path d="M975.5 88.0C974.9 90.5 972.9 98.4 972.0 103.0C971.1 107.6 970.8 111.2 970.0 115.7C969.2 120.2 967.9 125.4 967.0 130.0C966.1 134.6 965.1 138.2 964.4 143.5C963.7 148.8 963.5 156.0 963.0 162.0C962.5 168.0 962.5 174.8 961.7 179.5C960.9 184.2 959.4 186.8 958.0 190.0C956.6 193.2 955.4 196.4 953.4 199.0C951.4 201.6 948.8 203.7 946.0 205.5C943.2 207.3 939.9 208.9 936.7 210.0C933.5 211.1 930.2 211.5 927.0 212.0C923.8 212.5 920.0 212.3 917.3 212.8C914.6 213.3 912.9 214.1 911.0 215.0C909.1 215.9 907.3 215.8 906.0 218.0C904.7 220.2 903.9 224.7 903.0 228.0C902.1 231.3 901.4 234.4 900.7 237.7C900.0 241.0 899.5 244.6 899.0 248.0C898.5 251.4 898.2 254.3 898.0 258.0C897.8 261.7 898.0 265.7 898.0 270.0C898.0 274.3 898.5 278.7 898.0 283.7C897.5 288.7 896.2 294.4 895.0 300.0C893.8 305.6 891.2 312.7 891.0 317.0C890.8 321.3 892.8 323.2 894.0 326.0C895.2 328.8 896.5 331.1 898.0 333.6C899.5 336.1 901.2 338.7 903.0 341.0C904.8 343.3 907.5 345.3 909.0 347.5C910.5 349.7 911.3 351.9 912.0 354.0C912.7 356.1 912.8 357.3 913.0 360.0C913.2 362.7 913.0 367.0 913.0 370.0C913.0 373.0 912.5 375.0 913.0 378.0C913.5 381.0 914.8 384.8 916.0 388.0C917.2 391.2 917.8 394.6 920.0 397.4C922.2 400.2 925.8 402.7 929.0 405.0C932.2 407.3 936.3 409.0 939.5 411.3C942.7 413.6 945.2 416.2 948.0 419.0C950.8 421.8 954.7 426.5 956.0 428.0"/>
<path d="M885.4 359.2C887.8 359.3 895.4 359.5 900.0 359.6C904.6 359.7 910.8 359.9 913.0 360.0"/>
<path d="M939.5 144.0C941.6 144.1 947.9 144.6 952.0 144.5C956.1 144.4 962.3 143.7 964.4 143.5"/>
<path d="M920.0 397.4C918.3 398.2 913.2 400.4 910.0 402.0C906.8 403.6 903.5 405.5 900.7 407.0C897.9 408.5 894.3 410.3 893.0 411.0"/>
</g>
<path d="M410.0 86.0C410.9 86.5 413.5 87.8 415.1 88.8C416.8 89.8 418.5 90.8 420.0 92.0C421.5 93.2 422.6 94.7 424.0 96.0C425.3 97.4 427.3 98.0 428.0 100.0C428.7 102.0 429.2 106.0 428.0 108.0C426.8 110.0 422.8 110.3 421.0 112.0C419.2 113.7 417.2 116.0 417.0 118.0C416.8 120.0 418.2 122.5 420.0 124.0C421.8 125.5 425.8 126.3 428.0 127.0C430.2 127.7 431.4 127.9 433.0 128.4C434.7 128.9 436.2 129.6 438.0 130.0C439.8 130.4 442.0 130.4 444.0 130.6C446.0 130.8 448.0 131.2 450.0 131.0C452.0 130.8 454.0 130.1 456.0 129.6C458.0 129.1 459.9 128.4 462.0 128.0C464.1 127.6 466.3 127.2 468.5 127.1C470.6 126.9 472.8 126.8 475.0 127.0C477.2 127.2 479.4 127.5 481.6 128.0C483.8 128.5 486.0 129.3 488.0 130.0C490.0 130.7 491.9 131.7 493.9 132.3C495.9 133.0 498.0 133.3 500.0 134.0C502.0 134.7 504.1 135.4 506.1 136.3C508.1 137.1 510.0 138.2 512.0 139.0C514.0 139.8 516.1 140.4 518.1 141.3C520.1 142.1 522.2 143.2 524.0 144.0C525.8 144.8 527.2 145.7 528.8 146.3C530.5 146.9 532.2 147.5 534.0 147.6C535.8 147.7 537.7 147.0 539.5 146.8C541.3 146.5 543.1 146.5 545.0 146.0C546.9 145.5 548.8 144.6 550.6 143.8C552.5 143.0 554.2 141.6 556.0 141.0C557.8 140.4 559.7 140.3 561.5 140.0C563.3 139.6 565.2 138.9 567.0 139.0C568.8 139.1 570.6 140.1 572.5 140.6C574.3 141.1 576.1 141.4 578.0 142.0C579.9 142.6 582.0 143.6 583.9 144.5C585.8 145.4 587.7 147.2 589.5 147.6C591.3 148.0 593.0 147.2 594.8 146.9C596.5 146.7 597.6 146.6 600.0 146.0C602.4 145.4 606.6 143.6 609.0 143.5C611.4 143.4 612.6 145.0 614.4 145.6C616.2 146.2 618.3 146.4 620.0 147.0C621.7 147.6 623.1 148.3 624.7 149.0C626.2 149.7 627.7 150.6 629.2 151.2C630.8 151.9 632.4 152.4 634.0 153.0C635.6 153.6 637.3 154.3 638.9 154.9C640.6 155.5 641.7 156.3 644.0 156.5C646.3 156.7 650.6 156.6 653.0 156.0C655.4 155.4 656.5 153.9 658.3 153.1C660.2 152.3 662.1 151.7 664.0 151.0C665.9 150.3 667.9 149.6 669.9 148.7C671.8 147.9 673.8 147.0 675.5 146.0C677.2 145.0 678.4 143.7 679.8 142.6C681.2 141.4 682.7 140.2 684.0 139.0C685.3 137.8 686.5 136.5 687.9 135.4C689.2 134.2 690.7 133.4 692.0 132.0C693.3 130.6 694.3 128.7 695.6 127.2C697.0 125.7 698.5 124.3 700.0 123.0C701.5 121.7 703.2 120.9 704.7 119.6C706.2 118.4 707.3 116.9 709.0 115.7C710.7 114.5 713.0 113.4 715.0 112.3C717.0 111.2 718.9 109.9 721.0 109.0C723.1 108.1 725.3 107.7 727.5 107.0C729.6 106.3 731.6 105.2 733.8 104.6C736.0 104.0 738.6 104.1 741.0 103.7C743.3 103.2 745.9 102.4 748.0 102.0C750.1 101.6 751.6 101.7 753.4 101.5C755.1 101.4 756.9 101.3 758.7 101.1C760.5 100.8 762.3 100.3 764.0 100.0C765.7 99.7 767.3 99.3 769.0 99.0C770.7 98.8 772.4 98.8 774.1 98.5C775.7 98.3 777.3 97.7 779.0 97.3C780.6 97.0 782.3 96.6 784.0 96.5C785.7 96.4 787.6 96.8 789.3 96.8C791.1 96.8 792.9 96.7 794.7 96.5C796.5 96.4 798.3 96.4 800.0 96.0C801.7 95.6 803.2 94.6 804.9 94.1C806.6 93.6 808.3 94.4 810.0 93.0C811.7 91.6 814.2 87.2 815.0 86.0" fill="none" stroke="#c5c9da" stroke-width="3.4" stroke-linejoin="round" stroke-linecap="round" opacity=".6"/>
<path d="M410.0 86.0C410.9 86.5 413.5 87.8 415.1 88.8C416.8 89.8 418.5 90.8 420.0 92.0C421.5 93.2 422.6 94.7 424.0 96.0C425.3 97.4 427.3 98.0 428.0 100.0C428.7 102.0 429.2 106.0 428.0 108.0C426.8 110.0 422.8 110.3 421.0 112.0C419.2 113.7 417.2 116.0 417.0 118.0C416.8 120.0 418.2 122.5 420.0 124.0C421.8 125.5 425.8 126.3 428.0 127.0C430.2 127.7 431.4 127.9 433.0 128.4C434.7 128.9 436.2 129.6 438.0 130.0C439.8 130.4 442.0 130.4 444.0 130.6C446.0 130.8 448.0 131.2 450.0 131.0C452.0 130.8 454.0 130.1 456.0 129.6C458.0 129.1 459.9 128.4 462.0 128.0C464.1 127.6 466.3 127.2 468.5 127.1C470.6 126.9 472.8 126.8 475.0 127.0C477.2 127.2 479.4 127.5 481.6 128.0C483.8 128.5 486.0 129.3 488.0 130.0C490.0 130.7 491.9 131.7 493.9 132.3C495.9 133.0 498.0 133.3 500.0 134.0C502.0 134.7 504.1 135.4 506.1 136.3C508.1 137.1 510.0 138.2 512.0 139.0C514.0 139.8 516.1 140.4 518.1 141.3C520.1 142.1 522.2 143.2 524.0 144.0C525.8 144.8 527.2 145.7 528.8 146.3C530.5 146.9 532.2 147.5 534.0 147.6C535.8 147.7 537.7 147.0 539.5 146.8C541.3 146.5 543.1 146.5 545.0 146.0C546.9 145.5 548.8 144.6 550.6 143.8C552.5 143.0 554.2 141.6 556.0 141.0C557.8 140.4 559.7 140.3 561.5 140.0C563.3 139.6 565.2 138.9 567.0 139.0C568.8 139.1 570.6 140.1 572.5 140.6C574.3 141.1 576.1 141.4 578.0 142.0C579.9 142.6 582.0 143.6 583.9 144.5C585.8 145.4 587.7 147.2 589.5 147.6C591.3 148.0 593.0 147.2 594.8 146.9C596.5 146.7 597.6 146.6 600.0 146.0C602.4 145.4 606.6 143.6 609.0 143.5C611.4 143.4 612.6 145.0 614.4 145.6C616.2 146.2 618.3 146.4 620.0 147.0C621.7 147.6 623.1 148.3 624.7 149.0C626.2 149.7 627.7 150.6 629.2 151.2C630.8 151.9 632.4 152.4 634.0 153.0C635.6 153.6 637.3 154.3 638.9 154.9C640.6 155.5 641.7 156.3 644.0 156.5C646.3 156.7 650.6 156.6 653.0 156.0C655.4 155.4 656.5 153.9 658.3 153.1C660.2 152.3 662.1 151.7 664.0 151.0C665.9 150.3 667.9 149.6 669.9 148.7C671.8 147.9 673.8 147.0 675.5 146.0C677.2 145.0 678.4 143.7 679.8 142.6C681.2 141.4 682.7 140.2 684.0 139.0C685.3 137.8 686.5 136.5 687.9 135.4C689.2 134.2 690.7 133.4 692.0 132.0C693.3 130.6 694.3 128.7 695.6 127.2C697.0 125.7 698.5 124.3 700.0 123.0C701.5 121.7 703.2 120.9 704.7 119.6C706.2 118.4 707.3 116.9 709.0 115.7C710.7 114.5 713.0 113.4 715.0 112.3C717.0 111.2 718.9 109.9 721.0 109.0C723.1 108.1 725.3 107.7 727.5 107.0C729.6 106.3 731.6 105.2 733.8 104.6C736.0 104.0 738.6 104.1 741.0 103.7C743.3 103.2 745.9 102.4 748.0 102.0C750.1 101.6 751.6 101.7 753.4 101.5C755.1 101.4 756.9 101.3 758.7 101.1C760.5 100.8 762.3 100.3 764.0 100.0C765.7 99.7 767.3 99.3 769.0 99.0C770.7 98.8 772.4 98.8 774.1 98.5C775.7 98.3 777.3 97.7 779.0 97.3C780.6 97.0 782.3 96.6 784.0 96.5C785.7 96.4 787.6 96.8 789.3 96.8C791.1 96.8 792.9 96.7 794.7 96.5C796.5 96.4 798.3 96.4 800.0 96.0C801.7 95.6 803.2 94.6 804.9 94.1C806.6 93.6 808.3 94.4 810.0 93.0C811.7 91.6 814.2 87.2 815.0 86.0" fill="none" stroke="#a6a1bb" stroke-width="2.0" stroke-linejoin="round" opacity=".95"/>
<g fill="none" stroke-linejoin="round" stroke-linecap="round">
<path d="M810.0 93.0L814.3 95.6L818.0 99.0L826.0 103.0L832.0 103.3L838.0 103.5L844.4 103.2L850.7 102.0L855.0 107.0L857.7 113.0L865.0 113.0L873.0 111.6L879.0 119.0L884.0 126.8L889.0 130.7L895.0 133.0L900.6 135.3L906.0 138.0L911.5 138.6L917.0 139.0L922.5 138.7L928.0 139.0L933.7 141.6L939.5 144.0" stroke="#d9d0df" stroke-width="3.2" opacity=".45"/>
<path d="M810.0 93.0L814.3 95.6L818.0 99.0L826.0 103.0L832.0 103.3L838.0 103.5L844.4 103.2L850.7 102.0L855.0 107.0L857.7 113.0L865.0 113.0L873.0 111.6L879.0 119.0L884.0 126.8L889.0 130.7L895.0 133.0L900.6 135.3L906.0 138.0L911.5 138.6L917.0 139.0L922.5 138.7L928.0 139.0L933.7 141.6L939.5 144.0" stroke="#a799b2" stroke-width="1.8"/>
<path d="M396.0 86.0L393.5 90.8L389.2 95.4L385.0 100.0L381.1 105.1L377.0 110.0L372.7 118.5L372.0 128.0L372.4 134.0L373.0 140.0L375.7 144.9L378.0 150.0L380.3 155.3L383.8 160.0L387.0 168.0L390.7 176.8L398.0 183.0L406.0 187.9L412.0 193.0L417.0 199.0L423.0 204.0L428.0 210.0L428.0 216.0L425.4 221.0L418.0 227.0L411.5 232.0L409.0 240.0L407.4 247.5L404.0 253.0L395.0 256.0L389.9 256.2L385.0 255.0L378.0 258.0L378.9 265.3L379.6 272.6L384.0 279.0L388.0 283.7L387.0 288.8L387.0 294.0L385.0 303.0L381.0 310.0" stroke="#d9d0df" stroke-width="3.2" opacity=".45"/>
<path d="M396.0 86.0L393.5 90.8L389.2 95.4L385.0 100.0L381.1 105.1L377.0 110.0L372.7 118.5L372.0 128.0L372.4 134.0L373.0 140.0L375.7 144.9L378.0 150.0L380.3 155.3L383.8 160.0L387.0 168.0L390.7 176.8L398.0 183.0L406.0 187.9L412.0 193.0L417.0 199.0L423.0 204.0L428.0 210.0L428.0 216.0L425.4 221.0L418.0 227.0L411.5 232.0L409.0 240.0L407.4 247.5L404.0 253.0L395.0 256.0L389.9 256.2L385.0 255.0L378.0 258.0L378.9 265.3L379.6 272.6L384.0 279.0L388.0 283.7L387.0 288.8L387.0 294.0L385.0 303.0L381.0 310.0" stroke="#a799b2" stroke-width="1.8"/>
<path d="M381.0 310.0L372.0 312.0L364.4 312.9L358.4 315.6L352.0 317.0L345.5 319.0L339.0 321.0L333.0 319.5L327.0 318.0L318.0 322.0L313.0 324.2L309.0 328.0L300.0 326.0L293.6 325.3" stroke="#d9d0df" stroke-width="3.2" opacity=".45"/>
<path d="M381.0 310.0L372.0 312.0L364.4 312.9L358.4 315.6L352.0 317.0L345.5 319.0L339.0 321.0L333.0 319.5L327.0 318.0L318.0 322.0L313.0 324.2L309.0 328.0L300.0 326.0L293.6 325.3" stroke="#a799b2" stroke-width="1.8"/>
<path d="M381.0 310.0L381.5 317.0L382.0 324.0L382.2 330.3L383.8 336.4L388.5 339.6L392.0 344.0L396.3 347.0L400.4 350.3L408.0 354.0L414.3 358.6L417.5 364.0L419.0 370.0L420.5 375.5L422.6 380.8L427.0 388.0L431.0 394.7L428.0 403.0L425.4 411.3L427.0 420.0L428.0 428.0" stroke="#d9d0df" stroke-width="3.2" opacity=".45"/>
<path d="M381.0 310.0L381.5 317.0L382.0 324.0L382.2 330.3L383.8 336.4L388.5 339.6L392.0 344.0L396.3 347.0L400.4 350.3L408.0 354.0L414.3 358.6L417.5 364.0L419.0 370.0L420.5 375.5L422.6 380.8L427.0 388.0L431.0 394.7L428.0 403.0L425.4 411.3L427.0 420.0L428.0 428.0" stroke="#a799b2" stroke-width="1.8"/>
<path d="M284.0 256.0L286.3 261.7L289.5 267.0L294.5 269.8L300.0 271.0L305.1 271.6L309.9 273.0L314.4 275.4L313.0 284.0L309.0 292.0L304.2 296.4L301.0 302.0L297.6 307.0L293.6 311.5L294.2 318.4L293.6 325.3L289.3 328.2L285.0 331.0L280.2 333.6L275.6 336.4L271.2 338.8L267.3 342.0L259.0 338.0L250.6 333.7L242.0 337.0L233.0 339.0" stroke="#d9d0df" stroke-width="3.2" opacity=".45"/>
<path d="M284.0 256.0L286.3 261.7L289.5 267.0L294.5 269.8L300.0 271.0L305.1 271.6L309.9 273.0L314.4 275.4L313.0 284.0L309.0 292.0L304.2 296.4L301.0 302.0L297.6 307.0L293.6 311.5L294.2 318.4L293.6 325.3L289.3 328.2L285.0 331.0L280.2 333.6L275.6 336.4L271.2 338.8L267.3 342.0L259.0 338.0L250.6 333.7L242.0 337.0L233.0 339.0" stroke="#a799b2" stroke-width="1.8"/>
<path d="M233.0 210.0L242.0 214.0L250.6 218.4L257.0 224.0L261.7 229.5L266.0 238.0L270.0 246.0L276.0 252.0L284.0 256.0" stroke="#d9d0df" stroke-width="3.2" opacity=".45"/>
<path d="M233.0 210.0L242.0 214.0L250.6 218.4L257.0 224.0L261.7 229.5L266.0 238.0L270.0 246.0L276.0 252.0L284.0 256.0" stroke="#a799b2" stroke-width="1.8"/>
<path d="M428.0 428.0L436.0 424.0L440.9 425.6L446.0 426.0L452.0 428.0" stroke="#d9d0df" stroke-width="3.2" opacity=".45"/>
<path d="M428.0 428.0L436.0 424.0L440.9 425.6L446.0 426.0L452.0 428.0" stroke="#a799b2" stroke-width="1.8"/>
<path d="M525.7 428.0L526.4 422.3L528.5 417.0L534.1 415.1L540.0 414.5L546.8 414.9L553.5 414.0L558.7 415.1L564.0 416.0L573.0 419.7L575.7 428.0" stroke="#d9d0df" stroke-width="3.2" opacity=".45"/>
<path d="M525.7 428.0L526.4 422.3L528.5 417.0L534.1 415.1L540.0 414.5L546.8 414.9L553.5 414.0L558.7 415.1L564.0 416.0L573.0 419.7L575.7 428.0" stroke="#a799b2" stroke-width="1.8"/>
<path d="M731.6 390.4L731.6 385.7L734.7 379.5L743.0 379.0L751.8 378.0L753.5 374.0L755.0 370.2L756.5 365.0L758.0 360.9L766.0 361.2L773.5 360.9L780.0 359.0L786.0 355.0L792.5 347.5L802.0 345.0L807.0 344.6L812.0 344.7L819.0 348.0L825.8 353.0L830.3 356.0L834.0 360.0L837.7 364.1L842.4 367.0L849.0 364.0L856.3 361.4L865.0 360.5L873.0 360.0L879.2 359.9L885.4 359.2" stroke="#d9d0df" stroke-width="3.2" opacity=".45"/>
<path d="M731.6 390.4L731.6 385.7L734.7 379.5L743.0 379.0L751.8 378.0L753.5 374.0L755.0 370.2L756.5 365.0L758.0 360.9L766.0 361.2L773.5 360.9L780.0 359.0L786.0 355.0L792.5 347.5L802.0 345.0L807.0 344.6L812.0 344.7L819.0 348.0L825.8 353.0L830.3 356.0L834.0 360.0L837.7 364.1L842.4 367.0L849.0 364.0L856.3 361.4L865.0 360.5L873.0 360.0L879.2 359.9L885.4 359.2" stroke="#a799b2" stroke-width="1.8"/>
<path d="M731.6 390.4L739.4 395.0L747.1 398.1L752.0 402.0L750.0 410.0L751.8 414.8L752.0 420.0L750.0 428.0" stroke="#d9d0df" stroke-width="3.2" opacity=".45"/>
<path d="M731.6 390.4L739.4 395.0L747.1 398.1L752.0 402.0L750.0 410.0L751.8 414.8L752.0 420.0L750.0 428.0" stroke="#a799b2" stroke-width="1.8"/>
<path d="M731.6 390.4L724.0 391.0L717.6 391.0L708.3 393.5L707.5 398.0L713.0 404.3L716.0 409.0L717.6 414.4L718.0 420.0L722.0 428.0" stroke="#d9d0df" stroke-width="3.2" opacity=".45"/>
<path d="M731.6 390.4L724.0 391.0L717.6 391.0L708.3 393.5L707.5 398.0L713.0 404.3L716.0 409.0L717.6 414.4L718.0 420.0L722.0 428.0" stroke="#a799b2" stroke-width="1.8"/>
</g>
<g fill="#f2efe9" fill-opacity=".7" stroke="#5a5a5a" stroke-width=".8">
<circle cx="239" cy="107.4" r="1.5"/>
<circle cx="363" cy="120.7" r="1.5"/>
<circle cx="417" cy="110" r="1.5"/>
<circle cx="327.8" cy="194.8" r="1.5"/>
<circle cx="390" cy="215.6" r="1.5"/>
<circle cx="478" cy="209" r="1.5"/>
<circle cx="332.5" cy="234.5" r="1.5"/>
<circle cx="289" cy="300.4" r="1.5"/>
<circle cx="327.8" cy="289.8" r="1.5"/>
<circle cx="259.8" cy="312.9" r="1.5"/>
<circle cx="243.7" cy="357.2" r="1.5"/>
<circle cx="237.6" cy="383" r="1.5"/>
<circle cx="243.7" cy="416.9" r="1.5"/>
<circle cx="374.6" cy="367.8" r="1.5"/>
<circle cx="436.5" cy="357.2" r="1.5"/>
<circle cx="642.2" cy="157.3" r="1.5"/>
<circle cx="749" cy="169" r="1.5"/>
<circle cx="753.8" cy="202.3" r="1.5"/>
<circle cx="668" cy="224" r="1.5"/>
<circle cx="647" cy="280.4" r="1.5"/>
<circle cx="747.7" cy="298.4" r="1.5"/>
<circle cx="549.9" cy="335" r="1.5"/>
<circle cx="598.7" cy="356.4" r="1.5"/>
<circle cx="660.8" cy="365.6" r="1.5"/>
<circle cx="750.4" cy="394.7" r="1.5"/>
<circle cx="936.7" cy="131.5" r="1.5"/>
<circle cx="812.7" cy="389.7" r="1.5"/>
<circle cx="878.5" cy="207" r="1.5"/>
<circle cx="697.7" cy="129.6" r="1.5"/>
<circle cx="834.7" cy="293.4" r="1.5"/>
<circle cx="572.9" cy="181" r="1.5"/>
<circle cx="729" cy="271.3" r="1.5"/>
<circle cx="285.9" cy="359.2" r="2.8"/><circle cx="285.9" cy="359.2" r="1" fill="#555"/>
<circle cx="456.8" cy="271.3" r="2.8"/><circle cx="456.8" cy="271.3" r="1" fill="#555"/>
</g>
<g font-family="'Liberation Sans',sans-serif" stroke="#fff" stroke-opacity=".6" stroke-width="1.3" stroke-linejoin="round" paint-order="stroke" style="paint-order:stroke">
<text x="212.6" y="103.6" font-size="10" letter-spacing="0.25" fill="#2c2c2c">Крагујевац</text>
<text x="344.0" y="117.6" font-size="10" letter-spacing="0.196" fill="#2c2c2c">Зајечар</text>
<text x="401.8" y="121.9" font-size="10" letter-spacing="0.631" fill="#2c2c2c">Видин</text>
<text x="385.0" y="138.6" font-size="10.5" letter-spacing="0.378" fill="#7f6093" font-style="italic">Видин</text>
<text x="215.5" y="147.4" font-size="10.5" letter-spacing="0.1" fill="#7f6093" font-style="italic">Централна</text>
<text x="227.0" y="160.2" font-size="10.5" letter-spacing="0.1" fill="#7f6093" font-style="italic">Србија</text>
<text x="414.0" y="178.6" font-size="10.5" letter-spacing="0.565" fill="#7f6093" font-style="italic">Монтана</text>
<text x="316.7" y="190.6" font-size="10" letter-spacing="0.946" fill="#2c2c2c">Ниш</text>
<text x="376.0" y="212.0" font-size="10" letter-spacing="0.331" fill="#2c2c2c">Пирот</text>
<text x="463.7" y="205.1" font-size="10" letter-spacing="0.045" fill="#2c2c2c">Враца</text>
<text x="478.0" y="189.1" font-size="10.5" letter-spacing="0.049" fill="#7f6093" font-style="italic">Враца</text>
<text x="309.5" y="246.6" font-size="10" letter-spacing="0.366" fill="#2c2c2c">Лесковац</text>
<text x="212.4" y="245.3" font-size="10" letter-spacing="0.25" fill="#2c2c2c">Mitrovicë</text>
<text x="213.1" y="284.3" font-size="12.5" letter-spacing="0.1" fill="#5f4a6d">Kosova /</text>
<text x="219.5" y="301.0" font-size="12.5" letter-spacing="0.1" fill="#5f4a6d">Kosovo</text>
<text x="275.6" y="296.6" font-size="10" letter-spacing="0.279" fill="#2c2c2c">Gjilan</text>
<text x="312.5" y="286.3" font-size="10" letter-spacing="-0.004" fill="#2c2c2c">Врање</text>
<text x="245.6" y="325.9" font-size="10" letter-spacing="0.036" fill="#2c2c2c">Ferizaj</text>
<text x="199.0" y="341.2" font-size="10" letter-spacing="0.25" fill="#2c2c2c">Призрен</text>
<text x="267.3" y="351.5" font-size="12" letter-spacing="0.102" fill="#2c2c2c">Скопје</text>
<text x="227.1" y="367.6" font-size="10" letter-spacing="0.25" fill="#2c2c2c">Тетово</text>
<text x="215.8" y="395.3" font-size="10" letter-spacing="0.25" fill="#2c2c2c">Гостивар</text>
<text x="225.4" y="414.4" font-size="10" letter-spacing="0.25" fill="#2c2c2c">Кичево</text>
<text x="286.7" y="402.2" font-size="14" letter-spacing="-0.08" fill="#5f4a6d">Северна</text>
<text x="274.6" y="419.0" font-size="14" letter-spacing="0.457" fill="#5f4a6d">Македонија</text>
<text x="356.9" y="364.0" font-size="10" letter-spacing="0.828" fill="#2c2c2c">Кочани</text>
<text x="367.6" y="422.2" font-size="10.5" letter-spacing="-0.316" fill="#7f6093" font-style="italic">Југоисточен</text>
<text x="388.8" y="321.8" font-size="10.5" letter-spacing="0.182" fill="#7f6093" font-style="italic">Кюстендил</text>
<text x="406.5" y="352.9" font-size="10" letter-spacing="0.202" fill="#2c2c2c">Благоевград</text>
<text x="440.5" y="393.1" font-size="10.5" letter-spacing="0.123" fill="#7f6093" font-style="italic">Благоевград</text>
<text x="439.0" y="264.6" font-size="11.5" letter-spacing="0.203" fill="#2c2c2c">София</text>
<text x="490.6" y="339.0" font-size="10" letter-spacing="0.397" fill="#2c2c2c">Пазарджик</text>
<text x="492.0" y="284.3" font-size="10.5" letter-spacing="-0.212" fill="#7f6093" font-style="italic">Софийска</text>
<text x="602.9" y="103.9" font-size="10.5" letter-spacing="0.127" fill="#7f6093" font-style="italic">Teleorman</text>
<text x="688.8" y="96.4" font-size="10.5" letter-spacing="0.199" fill="#7f6093" font-style="italic">Giurgiu</text>
<text x="687.2" y="124.6" font-size="10" letter-spacing="-0.586" fill="#2c2c2c">Русе</text>
<text x="695.0" y="154.3" font-size="10.5" letter-spacing="-0.734" fill="#7f6093" font-style="italic">Русе</text>
<text x="745.6" y="158.6" font-size="10.5" letter-spacing="0.008" fill="#7f6093" font-style="italic">Разград</text>
<text x="622.8" y="169.0" font-size="10" letter-spacing="0.521" fill="#2c2c2c">Свищов</text>
<text x="556.8" y="177.9" font-size="10.5" letter-spacing="-0.032" fill="#7f6093" font-style="italic">Плевен</text>
<text x="730.4" y="180.6" font-size="10" letter-spacing="0.076" fill="#2c2c2c">Разград</text>
<text x="726.4" y="214.6" font-size="10" letter-spacing="0.36" fill="#2c2c2c">Търговище</text>
<text x="626.2" y="211.5" font-size="10.5" letter-spacing="0.014" fill="#7f6093" font-style="italic">Велико Търново</text>
<text x="549.8" y="233.4" font-size="10.5" letter-spacing="-0.009" fill="#7f6093" font-style="italic">Ловеч</text>
<text x="650.6" y="235.6" font-size="10" letter-spacing="0.158" fill="#2c2c2c">Велико</text>
<text x="647.0" y="247.3" font-size="10" letter-spacing="0.366" fill="#2c2c2c">Търново</text>
<text x="608.8" y="271.0" font-size="13.5" letter-spacing="0.734" fill="#5f4a6d">България</text>
<text x="623.7" y="292.6" font-size="10" letter-spacing="0.325" fill="#2c2c2c">Казанлък</text>
<text x="708.0" y="282.1" font-size="10.5" letter-spacing="-0.027" fill="#7f6093" font-style="italic">Сливен</text>
<text x="752.2" y="302.6" font-size="10" letter-spacing="0.062" fill="#2c2c2c">Ямбол</text>
<text x="624.2" y="311.2" font-size="10.5" letter-spacing="0.121" fill="#7f6093" font-style="italic">Стара Загора</text>
<text x="737.7" y="323.6" font-size="10.5" letter-spacing="0.032" fill="#7f6093" font-style="italic">Ямбол</text>
<text x="569.6" y="332.9" font-size="10.5" letter-spacing="0.19" fill="#7f6093" font-style="italic">Пловдив</text>
<text x="570.7" y="353.6" font-size="10" letter-spacing="0.3" fill="#2c2c2c">Асеновград</text>
<text x="641.4" y="362.6" font-size="10" letter-spacing="0.103" fill="#2c2c2c">Хасково</text>
<text x="675.7" y="389.7" font-size="10.5" letter-spacing="-0.24" fill="#7f6093" font-style="italic">Хасково</text>
<text x="554.3" y="407.8" font-size="10.5" letter-spacing="0.156" fill="#7f6093" font-style="italic">Смолян</text>
<text x="620.9" y="413.9" font-size="10.5" letter-spacing="0.454" fill="#7f6093" font-style="italic">Кърджали</text>
<text x="737.0" y="409.0" font-size="10" letter-spacing="-0.069" fill="#2c2c2c">Edirne</text>
<text x="805.0" y="95.6" font-size="10" letter-spacing="-0.065" fill="#2c2c2c">Călărași</text>
<text x="773.6" y="126.0" font-size="10.5" letter-spacing="0.1" fill="#7f6093" font-style="italic">Силистра</text>
<text x="915.4" y="144.1" font-size="10" letter-spacing="0.269" fill="#2c2c2c">Mangalia</text>
<text x="856.5" y="156.6" font-size="10.5" letter-spacing="-0.024" fill="#7f6093" font-style="italic">Добрич</text>
<text x="777.3" y="199.6" font-size="10.5" letter-spacing="0.362" fill="#7f6093" font-style="italic">Шумен</text>
<text x="833.5" y="212.0" font-size="10.5" letter-spacing="0.51" fill="#7f6093" font-style="italic">Варна</text>
<text x="881.8" y="212.8" font-size="10" letter-spacing="-0.404" fill="#2c2c2c">Варна</text>
<text x="794.7" y="307.3" font-size="10.5" letter-spacing="-0.139" fill="#7f6093" font-style="italic">Бургас</text>
<text x="792.0" y="386.4" font-size="10" letter-spacing="0.314" fill="#2c2c2c">Kırklareli</text>
<text x="831.3" y="403.0" font-size="10.5" letter-spacing="0.232" fill="#7f6093" font-style="italic">Kırklareli</text>
</g>
<g>
<circle cx="415.7" cy="107.4" r="20.1" fill="url(#g3)"/>
<circle cx="450.4" cy="133.8" r="14.2" fill="url(#g1)"/>
<circle cx="446.2" cy="185" r="17.7" fill="url(#g2)"/>
<circle cx="478" cy="208.7" r="18.9" fill="url(#g2)"/>
<circle cx="497.5" cy="143.5" r="14.2" fill="url(#g1)"/>
<circle cx="397.7" cy="154.6" r="11.8" fill="url(#g1)"/>
<circle cx="431.3" cy="281.8" r="18.3" fill="url(#g3)"/>
<circle cx="399" cy="322.6" r="16.5" fill="url(#g2)"/>
<circle cx="436.5" cy="357.2" r="17.7" fill="url(#g3)"/>
<circle cx="439.3" cy="322.6" r="14.2" fill="url(#g1)"/>
<circle cx="472.5" cy="372.5" r="16.5" fill="url(#g3)"/>
<circle cx="453" cy="405.8" r="16.5" fill="url(#g2)"/>
<circle cx="494.7" cy="405.8" r="15.3" fill="url(#g2)"/>
<circle cx="485" cy="283.7" r="14.2" fill="url(#g1)"/>
<circle cx="697.7" cy="129.6" r="19.5" fill="url(#g4)"/>
<circle cx="572.9" cy="181" r="18.9" fill="url(#g3)"/>
<circle cx="581.2" cy="215.6" r="15.3" fill="url(#g2)"/>
<circle cx="527" cy="197.6" r="14.2" fill="url(#g1)"/>
<circle cx="509" cy="168.4" r="13.0" fill="url(#g1)"/>
<circle cx="668" cy="220.6" r="17.7" fill="url(#g3)"/>
<circle cx="639.5" cy="247.5" r="15.3" fill="url(#g2)"/>
<circle cx="616.6" cy="227.6" r="14.2" fill="url(#g1)"/>
<circle cx="580.6" cy="244.5" r="11.8" fill="url(#g1)"/>
<circle cx="618.8" cy="183" r="11.8" fill="url(#g1)"/>
<circle cx="749" cy="168.4" r="15.3" fill="url(#g2)"/>
<circle cx="753.8" cy="202.3" r="15.3" fill="url(#g2)"/>
<circle cx="720" cy="188" r="13.0" fill="url(#g1)"/>
<circle cx="681" cy="168" r="11.8" fill="url(#g1)"/>
<circle cx="635" cy="155" r="11.8" fill="url(#g1)"/>
<circle cx="545" cy="170" r="11.8" fill="url(#g1)"/>
<circle cx="600" cy="160" r="10.6" fill="url(#g1)"/>
<circle cx="592.3" cy="276.8" r="13.0" fill="url(#g1)"/>
<circle cx="647" cy="280.4" r="14.2" fill="url(#g2)"/>
<circle cx="729" cy="271.3" r="18.9" fill="url(#g4)"/>
<circle cx="746.3" cy="297.6" r="15.3" fill="url(#g3)"/>
<circle cx="667.2" cy="303.2" r="16.5" fill="url(#g3)"/>
<circle cx="546.5" cy="335" r="22.4" fill="url(#g3)"/>
<circle cx="598.7" cy="356.4" r="13.0" fill="url(#g2)"/>
<circle cx="660.8" cy="364.2" r="17.7" fill="url(#g3)"/>
<circle cx="643.6" cy="398.9" r="15.3" fill="url(#g3)"/>
<circle cx="518.8" cy="350.3" r="14.2" fill="url(#g2)"/>
<circle cx="502" cy="403" r="13.0" fill="url(#g2)"/>
<circle cx="720" cy="378" r="13.0" fill="url(#g1)"/>
<circle cx="575" cy="405" r="11.8" fill="url(#g1)"/>
<circle cx="535" cy="375" r="10.6" fill="url(#g1)"/>
<circle cx="700" cy="330" r="10.6" fill="url(#g1)"/>
<circle cx="770" cy="330" r="10.6" fill="url(#g1)"/>
<circle cx="802" cy="132" r="14.2" fill="url(#g1)"/>
<circle cx="813" cy="96" r="14.2" fill="url(#g2)"/>
<circle cx="866.8" cy="161.5" r="16.5" fill="url(#g3)"/>
<circle cx="786.4" cy="200.3" r="15.3" fill="url(#g3)"/>
<circle cx="841" cy="199" r="14.2" fill="url(#g1)"/>
<circle cx="806" cy="240" r="14.2" fill="url(#g2)"/>
<circle cx="810" cy="266" r="14.2" fill="url(#g2)"/>
<circle cx="854" cy="274" r="11.8" fill="url(#g1)"/>
<circle cx="859" cy="278" r="11.8" fill="url(#g1)"/>
<circle cx="780" cy="270" r="10.6" fill="url(#g1)"/>
<circle cx="830" cy="175" r="10.6" fill="url(#g1)"/>
<circle cx="834.7" cy="293.4" r="20.1" fill="url(#g4)"/>
<circle cx="456.8" cy="271.3" r="20.1" fill="url(#g6)"/>
<circle cx="446" cy="278" r="26.0" fill="url(#g1)"/>
<circle cx="586.1" cy="339.8" r="23.6" fill="url(#g6)"/>
<circle cx="873" cy="205.8" r="18.3" fill="url(#g6)"/>
<circle cx="565" cy="345" r="30.7" fill="url(#g1)"/>
<circle cx="602" cy="362" r="23.6" fill="url(#g1)"/>
<circle cx="456.8" cy="271.3" r="14.5" fill="url(#hbig)"/>
<circle cx="586.1" cy="339.8" r="14" fill="url(#hmid)"/>
<circle cx="873" cy="205.8" r="13.5" fill="url(#hmid)"/>
</g>
</svg>
<div class="abs" style="left:720.3px;top:5px;width:66px;height:34px;background:#323232"></div>
<svg class="abs" style="left:720.3px;top:5px" width="66" height="34" viewBox="0 0 66 34" fill="none" stroke="#cdcdcd" stroke-width="1.15" stroke-linejoin="miter">
<path d="M9.6 17 L16.6 9.3 L24.2 17 M10.4 16.2 V24.5 H14.9 V19.2 H18.8 V24.5 H23.6 V16.2 M12.5 13.6 V9.6 H14.5 V11.5"/>
<path d="M47.2 10.6h9M47.2 14.65h9M47.2 18.7h9M47.2 22.7h9"/>
<rect x="42.2" y="9.5" width="2.3" height="2.3"/><circle cx="43.35" cy="14.65" r="1.15"/><rect x="42.2" y="17.55" width="2.3" height="2.3"/><path d="M42.1 23.9l1.25-2.4 1.25 2.4z"/>
</svg>
<div class="abs" style="left:755px;top:254.2px;width:31.3px;height:57.4px;background:#323232"></div>
<svg class="abs" style="left:755px;top:254.2px" width="32" height="58" viewBox="0 0 32 58" fill="none" stroke="#c6c6c6" stroke-width="1.8">
<path d="M9.3 15h12.6M15.6 8.8v12.6M9.3 41.6h12.6"/></svg>
<div class="abs" style="left:466.9px;top:317px;width:315.1px;height:14.5px;background:rgba(255,255,255,.66)"></div>
<div class="t" style="left:471.0px;top:318.8px;font-size:12.1px;line-height:12.1px;letter-spacing:0.554px;color:#3b3b3b">Map data © OpenStreetMap contributors, CC-BY-SA</div></div>
<div class="panel" style="left:245px;top:426px;width:773px;height:28.6px;border-top:none"></div>
<div class="t" style="left:533px;top:433.72px;font-size:12.5px;line-height:12.5px;letter-spacing:0.17px;color:#ccc;">Концентрация на карантинирани</div>
<svg class="abs" style="left:250px;top:428px" width="770" height="26" viewBox="250 428 770 26" fill="none" stroke="#c2c2c2" stroke-width="1.1" stroke-linejoin="miter">
<path d="M262.5 435.3 L256.4 440.8 L262.5 446.4Z"/><path d="M1000.6 434.5 L1006.8 440.6 L1000.6 446.8Z"/></svg>
<div class="panel" style="left:234px;top:466px;width:795px;height:118px"></div>
<div class="t" style="left:239.7px;top:475.73px;font-size:14.5px;line-height:14.5px;letter-spacing:0.064px;color:#ccc;">Брой заболели по дни</div>
<svg class="abs" style="left:0;top:0" width="1031" height="613" viewBox="0 0 1031 613" font-family="'Liberation Sans',sans-serif">
<g stroke="#404040" stroke-width="1" stroke-dasharray="3 2" fill="none">
<path d="M285.4 541.5H995.4"/>
<path d="M285.4 530.5H995.4"/>
<path d="M285.4 520.5H995.4"/>
<path d="M358.5 519.5V551"/>
<path d="M448.5 519.5V551"/>
<path d="M541.5 519.5V551"/>
<path d="M631.5 519.5V551"/>
<path d="M725.5 519.5V551"/>
<path d="M818.5 519.5V551"/>
<path d="M908.5 519.5V551"/>
</g>
<g stroke="#5e5e5e" stroke-width="1" fill="none"><path d="M285.5 519V556.5M278 519.5H285M278 530.5H285M278 541.5H285M278 551.5H995.4"/>
<path d="M358.5 551.5V556.5"/>
<path d="M448.5 551.5V556.5"/>
<path d="M541.5 551.5V556.5"/>
<path d="M631.5 551.5V556.5"/>
<path d="M725.5 551.5V556.5"/>
<path d="M818.5 551.5V556.5"/>
<path d="M908.5 551.5V556.5"/>
</g>
<g fill="#ffaa17">
<rect x="324.51" y="551.22" width="3.06" height="0.38"/>
<rect x="345.57" y="551.20" width="3.06" height="0.40"/>
<rect x="354.59" y="551.18" width="3.06" height="0.42"/>
<rect x="375.65" y="551.17" width="3.06" height="0.43"/>
<rect x="381.67" y="551.21" width="3.06" height="0.39"/>
<rect x="387.69" y="551.22" width="3.06" height="0.38"/>
<rect x="396.71" y="551.18" width="3.06" height="0.42"/>
<rect x="399.72" y="551.07" width="3.06" height="0.53"/>
<rect x="402.73" y="551.08" width="3.06" height="0.52"/>
<rect x="405.74" y="551.13" width="3.06" height="0.47"/>
<rect x="408.75" y="551.04" width="3.06" height="0.56"/>
<rect x="411.76" y="551.14" width="3.06" height="0.46"/>
<rect x="417.77" y="550.94" width="3.06" height="0.66"/>
<rect x="420.78" y="550.95" width="3.06" height="0.65"/>
<rect x="423.79" y="551.02" width="3.06" height="0.58"/>
<rect x="426.80" y="551.05" width="3.06" height="0.55"/>
<rect x="429.81" y="550.84" width="3.06" height="0.76"/>
<rect x="432.82" y="551.15" width="3.06" height="0.45"/>
<rect x="438.83" y="551.02" width="3.06" height="0.58"/>
<rect x="441.84" y="550.79" width="3.06" height="0.81"/>
<rect x="444.85" y="550.85" width="3.06" height="0.75"/>
<rect x="447.86" y="551.07" width="3.06" height="0.53"/>
<rect x="450.87" y="551.09" width="3.06" height="0.51"/>
<rect x="459.89" y="551.17" width="3.06" height="0.43"/>
<rect x="462.90" y="551.14" width="3.06" height="0.46"/>
<rect x="465.91" y="551.10" width="3.06" height="0.50"/>
<rect x="468.92" y="551.14" width="3.06" height="0.46"/>
<rect x="471.93" y="551.10" width="3.06" height="0.50"/>
<rect x="483.96" y="551.24" width="3.06" height="0.36"/>
<rect x="486.97" y="551.23" width="3.06" height="0.37"/>
<rect x="502.01" y="551.20" width="3.06" height="0.40"/>
<rect x="523.07" y="551.24" width="3.06" height="0.36"/>
<rect x="529.09" y="551.24" width="3.06" height="0.36"/>
<rect x="544.13" y="551.20" width="3.06" height="0.40"/>
<rect x="547.14" y="551.13" width="3.06" height="0.47"/>
<rect x="550.15" y="551.07" width="3.06" height="0.53"/>
<rect x="553.15" y="551.04" width="3.06" height="0.56"/>
<rect x="556.16" y="551.11" width="3.06" height="0.49"/>
<rect x="565.19" y="551.01" width="3.06" height="0.59"/>
<rect x="568.20" y="550.99" width="3.06" height="0.61"/>
<rect x="571.21" y="550.74" width="3.06" height="0.86"/>
<rect x="574.21" y="550.71" width="3.06" height="0.89"/>
<rect x="577.22" y="550.86" width="3.06" height="0.74"/>
<rect x="580.23" y="550.95" width="3.06" height="0.65"/>
<rect x="583.24" y="551.18" width="3.06" height="0.42"/>
<rect x="586.25" y="550.53" width="3.06" height="1.07"/>
<rect x="589.26" y="550.66" width="3.06" height="0.94"/>
<rect x="592.26" y="550.70" width="3.06" height="0.90"/>
<rect x="595.27" y="550.67" width="3.06" height="0.93"/>
<rect x="598.28" y="550.51" width="3.06" height="1.09"/>
<rect x="601.29" y="550.88" width="3.06" height="0.72"/>
<rect x="604.30" y="551.01" width="3.06" height="0.59"/>
<rect x="607.31" y="550.23" width="3.06" height="1.37"/>
<rect x="610.32" y="550.42" width="3.06" height="1.18"/>
<rect x="613.32" y="550.49" width="3.06" height="1.11"/>
<rect x="616.33" y="550.04" width="3.06" height="1.56"/>
<rect x="619.34" y="550.26" width="3.06" height="1.34"/>
<rect x="622.35" y="550.77" width="3.06" height="0.83"/>
<rect x="625.36" y="551.03" width="3.06" height="0.57"/>
<rect x="628.37" y="550.38" width="3.06" height="1.22"/>
<rect x="631.37" y="549.61" width="3.06" height="1.99"/>
<rect x="634.38" y="549.37" width="3.06" height="2.23"/>
<rect x="637.39" y="549.59" width="3.06" height="2.01"/>
<rect x="640.40" y="549.81" width="3.06" height="1.79"/>
<rect x="643.41" y="550.05" width="3.06" height="1.55"/>
<rect x="646.42" y="550.20" width="3.06" height="1.40"/>
<rect x="649.43" y="549.15" width="3.06" height="2.45"/>
<rect x="652.43" y="548.64" width="3.06" height="2.96"/>
<rect x="655.44" y="548.69" width="3.06" height="2.92"/>
<rect x="658.45" y="549.50" width="3.06" height="2.10"/>
<rect x="661.46" y="548.72" width="3.06" height="2.88"/>
<rect x="664.47" y="549.52" width="3.06" height="2.08"/>
<rect x="667.48" y="550.22" width="3.06" height="1.38"/>
<rect x="670.48" y="549.11" width="3.06" height="2.49"/>
<rect x="673.49" y="548.70" width="3.06" height="2.90"/>
<rect x="676.50" y="549.27" width="3.06" height="2.33"/>
<rect x="679.51" y="548.93" width="3.06" height="2.67"/>
<rect x="682.52" y="548.92" width="3.06" height="2.68"/>
<rect x="685.53" y="549.30" width="3.06" height="2.30"/>
<rect x="688.54" y="550.06" width="3.06" height="1.54"/>
<rect x="691.54" y="549.23" width="3.06" height="2.37"/>
<rect x="694.55" y="549.02" width="3.06" height="2.58"/>
<rect x="697.56" y="549.41" width="3.06" height="2.19"/>
<rect x="700.57" y="548.75" width="3.06" height="2.85"/>
<rect x="703.58" y="548.88" width="3.06" height="2.72"/>
<rect x="706.59" y="550.08" width="3.06" height="1.52"/>
<rect x="709.59" y="550.43" width="3.06" height="1.17"/>
<rect x="712.60" y="549.38" width="3.06" height="2.22"/>
<rect x="715.61" y="549.85" width="3.06" height="1.75"/>
<rect x="718.62" y="549.46" width="3.06" height="2.14"/>
<rect x="721.63" y="549.73" width="3.06" height="1.87"/>
<rect x="724.64" y="548.57" width="3.06" height="3.03"/>
<rect x="727.65" y="549.64" width="3.06" height="1.96"/>
<rect x="730.65" y="550.53" width="3.06" height="1.07"/>
<rect x="733.66" y="549.15" width="3.06" height="2.45"/>
<rect x="736.67" y="549.50" width="3.06" height="2.10"/>
<rect x="739.68" y="548.59" width="3.06" height="3.01"/>
<rect x="742.69" y="548.67" width="3.06" height="2.93"/>
<rect x="745.70" y="548.76" width="3.06" height="2.84"/>
<rect x="748.71" y="549.96" width="3.06" height="1.64"/>
<rect x="751.71" y="550.59" width="3.06" height="1.01"/>
<rect x="754.72" y="548.81" width="3.06" height="2.79"/>
<rect x="757.73" y="548.79" width="3.06" height="2.81"/>
<rect x="760.74" y="549.64" width="3.06" height="1.96"/>
<rect x="763.75" y="549.29" width="3.06" height="2.31"/>
<rect x="766.76" y="549.70" width="3.06" height="1.90"/>
<rect x="769.76" y="549.80" width="3.06" height="1.80"/>
<rect x="772.77" y="550.36" width="3.06" height="1.24"/>
<rect x="775.78" y="549.72" width="3.06" height="1.88"/>
<rect x="778.79" y="549.45" width="3.06" height="2.15"/>
<rect x="781.80" y="549.42" width="3.06" height="2.18"/>
<rect x="784.81" y="549.69" width="3.06" height="1.91"/>
<rect x="787.82" y="549.22" width="3.06" height="2.38"/>
<rect x="790.82" y="550.17" width="3.06" height="1.43"/>
<rect x="793.83" y="550.71" width="3.06" height="0.89"/>
<rect x="796.84" y="549.59" width="3.06" height="2.01"/>
<rect x="799.85" y="549.47" width="3.06" height="2.13"/>
<rect x="802.86" y="549.90" width="3.06" height="1.70"/>
<rect x="805.87" y="549.85" width="3.06" height="1.75"/>
<rect x="808.87" y="549.36" width="3.06" height="2.24"/>
<rect x="811.88" y="550.20" width="3.06" height="1.40"/>
<rect x="814.89" y="550.72" width="3.06" height="0.88"/>
<rect x="817.90" y="549.97" width="3.06" height="1.63"/>
<rect x="820.91" y="550.20" width="3.06" height="1.40"/>
<rect x="823.92" y="550.11" width="3.06" height="1.49"/>
<rect x="826.93" y="550.00" width="3.06" height="1.60"/>
<rect x="829.93" y="549.80" width="3.06" height="1.80"/>
<rect x="832.94" y="550.46" width="3.06" height="1.14"/>
<rect x="835.95" y="550.79" width="3.06" height="0.81"/>
<rect x="838.96" y="550.08" width="3.06" height="1.52"/>
<rect x="841.97" y="549.64" width="3.06" height="1.96"/>
<rect x="844.98" y="549.90" width="3.06" height="1.70"/>
<rect x="847.98" y="549.36" width="3.06" height="2.24"/>
<rect x="850.99" y="549.36" width="3.06" height="2.24"/>
<rect x="854.00" y="550.41" width="3.06" height="1.19"/>
<rect x="857.01" y="550.70" width="3.06" height="0.90"/>
<rect x="860.02" y="549.41" width="3.06" height="2.19"/>
<rect x="863.03" y="549.76" width="3.06" height="1.84"/>
<rect x="866.04" y="549.80" width="3.06" height="1.80"/>
<rect x="869.04" y="549.09" width="3.06" height="2.51"/>
<rect x="872.05" y="549.36" width="3.06" height="2.24"/>
<rect x="875.06" y="550.03" width="3.06" height="1.57"/>
<rect x="878.07" y="550.36" width="3.06" height="1.24"/>
<rect x="881.08" y="549.06" width="3.06" height="2.54"/>
<rect x="884.09" y="549.59" width="3.06" height="2.01"/>
<rect x="887.09" y="549.65" width="3.06" height="1.95"/>
<rect x="890.10" y="549.31" width="3.06" height="2.29"/>
<rect x="893.11" y="549.28" width="3.06" height="2.32"/>
<rect x="896.12" y="549.88" width="3.06" height="1.72"/>
<rect x="899.13" y="550.26" width="3.06" height="1.34"/>
<rect x="902.14" y="548.95" width="3.06" height="2.65"/>
<rect x="905.15" y="548.60" width="3.06" height="3.00"/>
<rect x="908.15" y="549.19" width="3.06" height="2.41"/>
<rect x="911.16" y="548.34" width="3.06" height="3.26"/>
<rect x="914.17" y="547.93" width="3.06" height="3.67"/>
<rect x="917.18" y="547.93" width="3.06" height="3.67"/>
<rect x="920.19" y="549.36" width="3.06" height="2.24"/>
<rect x="923.20" y="546.77" width="3.06" height="4.83"/>
<rect x="926.21" y="545.60" width="3.06" height="6.00"/>
<rect x="929.21" y="545.08" width="3.06" height="6.52"/>
<rect x="932.22" y="544.91" width="3.06" height="6.69"/>
<rect x="935.23" y="544.45" width="3.06" height="7.16"/>
<rect x="938.24" y="544.39" width="3.06" height="7.21"/>
<rect x="941.25" y="547.12" width="3.06" height="4.48"/>
<rect x="944.26" y="540.41" width="3.06" height="11.19"/>
<rect x="947.26" y="541.00" width="3.06" height="10.60"/>
<rect x="950.27" y="542.24" width="3.06" height="9.36"/>
<rect x="953.28" y="536.69" width="3.06" height="14.91"/>
<rect x="956.29" y="536.35" width="3.06" height="15.25"/>
<rect x="959.30" y="539.23" width="3.06" height="12.37"/>
<rect x="962.31" y="542.54" width="3.06" height="9.06"/>
<rect x="965.32" y="532.79" width="3.06" height="18.81"/>
<rect x="968.32" y="536.41" width="3.06" height="15.19"/>
<rect x="971.33" y="533.16" width="3.06" height="18.44"/>
<rect x="974.34" y="534.69" width="3.06" height="16.91"/>
<rect x="977.35" y="540.54" width="3.06" height="11.06"/>
<rect x="980.36" y="533.05" width="3.06" height="18.55"/>
<rect x="983.37" y="527.82" width="3.06" height="23.78"/>
<rect x="986.37" y="531.46" width="3.06" height="20.14"/>
<rect x="989.38" y="547.15" width="3.06" height="4.45"/>
<rect x="992.39" y="524.37" width="3.06" height="27.23"/>
</g>
<g font-size="10.5" fill="#ababab" fill-opacity=".95" text-anchor="middle" stroke="#1d1d1d" stroke-width="0.7" stroke-opacity=".5" style="paint-order:stroke" paint-order="stroke">
<text x="286.9" y="547.9">4</text>
<text x="289.9" y="547.9">0</text>
<text x="292.9" y="547.9">2</text>
<text x="295.9" y="547.7">1</text>
<text x="298.9" y="547.7">16</text>
<text x="301.9" y="547.7">8</text>
<text x="305.0" y="547.8">10</text>
<text x="308.0" y="547.8">10</text>
<text x="311.0" y="547.7">11</text>
<text x="314.0" y="547.7">19</text>
<text x="317.0" y="547.7">11</text>
<text x="320.0" y="547.7">15</text>
<text x="323.0" y="547.5">20</text>
<text x="326.0" y="547.5">36</text>
<text x="329.0" y="547.5">22</text>
<text x="332.0" y="547.7">16</text>
<text x="335.0" y="547.7">17</text>
<text x="338.0" y="547.7">22</text>
<text x="341.1" y="547.6">22</text>
<text x="344.1" y="547.5">29</text>
<text x="347.1" y="547.5">38</text>
<text x="350.1" y="547.5">15</text>
<text x="353.1" y="547.5">13</text>
<text x="356.1" y="547.5">40</text>
<text x="359.1" y="547.5">28</text>
<text x="362.1" y="547.6">23</text>
<text x="365.1" y="547.6">27</text>
<text x="368.1" y="547.6">27</text>
<text x="371.1" y="547.6">25</text>
<text x="374.1" y="547.5">18</text>
<text x="377.2" y="547.5">41</text>
<text x="380.2" y="547.5">31</text>
<text x="383.2" y="547.5">37</text>
<text x="386.2" y="547.5">32</text>
<text x="389.2" y="547.5">36</text>
<text x="392.2" y="547.5">31</text>
<text x="395.2" y="547.5">18</text>
<text x="398.2" y="547.4">40</text>
<text x="401.2" y="547.4">50</text>
<text x="404.2" y="547.4">49</text>
<text x="407.2" y="547.3">44</text>
<text x="410.3" y="547.3">53</text>
<text x="413.3" y="547.3">43</text>
<text x="416.3" y="547.2">22</text>
<text x="419.3" y="547.2">62</text>
<text x="422.3" y="547.2">61</text>
<text x="425.3" y="547.3">55</text>
<text x="428.3" y="547.1">52</text>
<text x="431.3" y="547.1">72</text>
<text x="434.3" y="547.1">42</text>
<text x="437.3" y="547.3">27</text>
<text x="440.3" y="547.1">55</text>
<text x="443.3" y="547.1">76</text>
<text x="446.4" y="547.1">71</text>
<text x="449.4" y="547.1">50</text>
<text x="452.4" y="547.4">48</text>
<text x="455.4" y="547.4">32</text>
<text x="458.4" y="547.5">26</text>
<text x="461.4" y="547.4">41</text>
<text x="464.4" y="547.4">43</text>
<text x="467.4" y="547.4">47</text>
<text x="470.4" y="547.4">43</text>
<text x="473.4" y="547.4">47</text>
<text x="476.4" y="547.4">30</text>
<text x="479.4" y="547.6">21</text>
<text x="482.5" y="547.5">32</text>
<text x="485.5" y="547.5">34</text>
<text x="488.5" y="547.5">35</text>
<text x="491.5" y="547.5">31</text>
<text x="494.5" y="547.6">33</text>
<text x="497.5" y="547.6">22</text>
<text x="500.5" y="547.5">17</text>
<text x="503.5" y="547.5">38</text>
<text x="506.5" y="547.5">33</text>
<text x="509.5" y="547.6">33</text>
<text x="512.5" y="547.6">30</text>
<text x="515.5" y="547.6">31</text>
<text x="518.6" y="547.6">28</text>
<text x="521.6" y="547.5">17</text>
<text x="524.6" y="547.5">34</text>
<text x="527.6" y="547.5">28</text>
<text x="530.6" y="547.5">34</text>
<text x="533.6" y="547.5">27</text>
<text x="536.6" y="547.6">29</text>
<text x="539.6" y="547.6">26</text>
<text x="542.6" y="547.5">18</text>
<text x="545.6" y="547.4">38</text>
<text x="548.6" y="547.4">44</text>
<text x="551.6" y="547.3">50</text>
<text x="554.7" y="547.3">53</text>
<text x="557.7" y="547.3">46</text>
<text x="560.7" y="547.4">32</text>
<text x="563.7" y="547.3">27</text>
<text x="566.7" y="547.3">56</text>
<text x="569.7" y="547.0">58</text>
<text x="572.7" y="547.0">81</text>
<text x="575.7" y="547.0">84</text>
<text x="578.7" y="547.0">70</text>
<text x="581.7" y="547.2">61</text>
<text x="584.7" y="546.8">40</text>
<text x="587.8" y="546.8">101</text>
<text x="590.8" y="546.8">89</text>
<text x="593.8" y="547.0">85</text>
<text x="596.8" y="546.8">88</text>
<text x="599.8" y="546.8">103</text>
<text x="602.8" y="546.8">68</text>
<text x="605.8" y="546.5">56</text>
<text x="608.8" y="546.5">129</text>
<text x="611.8" y="546.5">111</text>
<text x="614.8" y="546.3">105</text>
<text x="617.8" y="546.3">147</text>
<text x="620.8" y="546.3">126</text>
<text x="623.9" y="546.6">78</text>
<text x="626.9" y="546.7">54</text>
<text x="629.9" y="545.9">115</text>
<text x="632.9" y="545.7">188</text>
<text x="635.9" y="545.7">210</text>
<text x="638.9" y="545.7">190</text>
<text x="641.9" y="545.9">169</text>
<text x="644.9" y="546.1">146</text>
<text x="647.9" y="545.5">132</text>
<text x="650.9" y="544.9">231</text>
<text x="653.9" y="544.9">279</text>
<text x="656.9" y="544.9">275</text>
<text x="660.0" y="545.0">198</text>
<text x="663.0" y="545.0">272</text>
<text x="666.0" y="545.0">196</text>
<text x="669.0" y="545.4">130</text>
<text x="672.0" y="545.0">235</text>
<text x="675.0" y="545.0">274</text>
<text x="678.0" y="545.0">220</text>
<text x="681.0" y="545.2">252</text>
<text x="684.0" y="545.2">253</text>
<text x="687.0" y="545.2">217</text>
<text x="690.0" y="545.5">145</text>
<text x="693.0" y="545.3">224</text>
<text x="696.1" y="545.3">243</text>
<text x="699.1" y="545.0">207</text>
<text x="702.1" y="545.0">269</text>
<text x="705.1" y="545.0">257</text>
<text x="708.1" y="545.2">143</text>
<text x="711.1" y="545.7">110</text>
<text x="714.1" y="545.7">209</text>
<text x="717.1" y="545.7">165</text>
<text x="720.1" y="545.8">202</text>
<text x="723.1" y="544.9">176</text>
<text x="726.1" y="544.9">286</text>
<text x="729.1" y="544.9">185</text>
<text x="732.2" y="545.5">101</text>
<text x="735.2" y="545.5">231</text>
<text x="738.2" y="544.9">198</text>
<text x="741.2" y="544.9">284</text>
<text x="744.2" y="544.9">276</text>
<text x="747.2" y="545.0">268</text>
<text x="750.2" y="545.1">155</text>
<text x="753.2" y="545.1">95</text>
<text x="756.2" y="545.1">263</text>
<text x="759.2" y="545.1">265</text>
<text x="762.2" y="545.1">185</text>
<text x="765.3" y="545.6">218</text>
<text x="768.3" y="545.6">179</text>
<text x="771.3" y="546.0">170</text>
<text x="774.3" y="546.0">117</text>
<text x="777.3" y="545.7">177</text>
<text x="780.3" y="545.7">203</text>
<text x="783.3" y="545.7">206</text>
<text x="786.3" y="545.5">180</text>
<text x="789.3" y="545.5">225</text>
<text x="792.3" y="545.5">135</text>
<text x="795.3" y="545.9">84</text>
<text x="798.3" y="545.8">190</text>
<text x="801.4" y="545.8">201</text>
<text x="804.4" y="545.8">160</text>
<text x="807.4" y="545.7">165</text>
<text x="810.4" y="545.7">211</text>
<text x="813.4" y="545.7">132</text>
<text x="816.4" y="546.3">83</text>
<text x="819.4" y="546.3">154</text>
<text x="822.4" y="546.3">132</text>
<text x="825.4" y="546.3">141</text>
<text x="828.4" y="546.1">151</text>
<text x="831.4" y="546.1">170</text>
<text x="834.4" y="546.1">108</text>
<text x="837.5" y="546.4">76</text>
<text x="840.5" y="545.9">143</text>
<text x="843.5" y="545.9">185</text>
<text x="846.5" y="545.7">160</text>
<text x="849.5" y="545.7">211</text>
<text x="852.5" y="545.7">211</text>
<text x="855.5" y="545.7">112</text>
<text x="858.5" y="545.7">85</text>
<text x="861.5" y="545.7">207</text>
<text x="864.5" y="545.7">174</text>
<text x="867.5" y="545.4">170</text>
<text x="870.5" y="545.4">237</text>
<text x="873.6" y="545.4">211</text>
<text x="876.6" y="545.7">148</text>
<text x="879.6" y="545.4">117</text>
<text x="882.6" y="545.4">240</text>
<text x="885.6" y="545.4">190</text>
<text x="888.6" y="545.6">184</text>
<text x="891.6" y="545.6">216</text>
<text x="894.6" y="545.6">219</text>
<text x="897.6" y="545.6">162</text>
<text x="900.6" y="545.2">126</text>
<text x="903.6" y="544.9">250</text>
<text x="906.6" y="544.9">283</text>
<text x="909.7" y="544.6">227</text>
<text x="912.7" y="544.2">308</text>
<text x="915.7" y="544.2">346</text>
<text x="918.7" y="544.2">346</text>
<text x="921.7" y="543.1">211</text>
<text x="924.7" y="541.9">456</text>
<text x="927.7" y="541.4">566</text>
<text x="930.7" y="541.2">615</text>
<text x="933.7" y="540.7">631</text>
<text x="936.7" y="540.7">675</text>
<text x="939.7" y="540.7">680</text>
<text x="942.8" y="536.7">423</text>
<text x="945.8" y="536.7">1,056</text>
<text x="948.8" y="536.7">1,000</text>
<text x="951.8" y="533.0">883</text>
<text x="954.8" y="532.6">1,407</text>
<text x="957.8" y="532.6">1,439</text>
<text x="960.8" y="532.6">1,167</text>
<text x="963.8" y="529.1">855</text>
<text x="966.8" y="529.1">1,775</text>
<text x="969.8" y="529.1">1,433</text>
<text x="972.8" y="529.5">1,740</text>
<text x="975.8" y="529.5">1,595</text>
<text x="978.9" y="529.4">1,043</text>
<text x="983.4" y="524.1" text-anchor="end">1,750</text>
<text x="986.4" y="524.1" text-anchor="end">2,243</text>
<text x="989.4" y="541.0" text-anchor="end">1,900</text>
<text x="992.4" y="542.5" text-anchor="end">420</text>
<text x="995.4" y="544.0" text-anchor="end">2,569</text>
</g>
</svg>
<div class="t" style="left:260.3px;top:515.07px;font-size:11.5px;line-height:11.5px;letter-spacing:-0.096px;color:#ababab;">3k</div>
<div class="t" style="left:260.3px;top:525.37px;font-size:11.5px;line-height:11.5px;letter-spacing:-0.096px;color:#ababab;">2k</div>
<div class="t" style="left:260.3px;top:535.67px;font-size:11.5px;line-height:11.5px;letter-spacing:-0.096px;color:#ababab;">1k</div>
<div class="t" style="left:266.3px;top:546.47px;font-size:11.5px;line-height:11.5px;letter-spacing:0px;color:#ababab;">0</div>
<div class="t" style="left:299.6px;top:560.47px;font-size:11.5px;line-height:11.5px;letter-spacing:-0.288px;color:#9c9c9c;">M03</div>
<div class="t" style="left:392px;top:560.47px;font-size:11.5px;line-height:11.5px;letter-spacing:-0.388px;color:#9c9c9c;">M04</div>
<div class="t" style="left:484.5px;top:560.47px;font-size:11.5px;line-height:11.5px;letter-spacing:0.012px;color:#9c9c9c;">M05</div>
<div class="t" style="left:578.3px;top:560.47px;font-size:11.5px;line-height:11.5px;letter-spacing:0.012px;color:#9c9c9c;">M06</div>
<div class="t" style="left:669px;top:560.47px;font-size:11.5px;line-height:11.5px;letter-spacing:0.012px;color:#9c9c9c;">M07</div>
<div class="t" style="left:762.5px;top:560.47px;font-size:11.5px;line-height:11.5px;letter-spacing:0.012px;color:#9c9c9c;">M08</div>
<div class="t" style="left:855.3px;top:560.47px;font-size:11.5px;line-height:11.5px;letter-spacing:-0.488px;color:#9c9c9c;">M09</div>
<div class="t" style="left:946px;top:560.47px;font-size:11.5px;line-height:11.5px;letter-spacing:0.162px;color:#9c9c9c;">M10</div>
<div class="abs" style="left:247.4px;top:582px;width:124.1px;height:27px;background:#222"></div>
<div class="abs" style="left:247.4px;top:608.6px;width:124.1px;height:2.1px;background:#4a8fd8"></div>
<div class="abs" style="left:377px;top:583px;width:161.5px;height:27px;background:#0b0b0b;border:1px solid #3a3a3a;box-sizing:border-box"></div>
<div class="abs" style="left:542.5px;top:583px;width:160px;height:27px;background:#0b0b0b;border:1px solid #3a3a3a;box-sizing:border-box"></div>
<div class="t" style="left:259.9px;top:591.5px;font-size:12.4px;line-height:12.4px;letter-spacing:0.128px;color:#d0d0d0;">Заболели по дни</div>
<div class="t" style="left:389.7px;top:591.5px;font-size:12.4px;line-height:12.4px;letter-spacing:0.065px;color:#e4e4e4;">Заболели с натрупване</div>
<div class="t" style="left:555px;top:591.5px;font-size:12.4px;line-height:12.4px;letter-spacing:0.268px;color:#e4e4e4;">Карантинирани по дни</div>
</body>
</html>
